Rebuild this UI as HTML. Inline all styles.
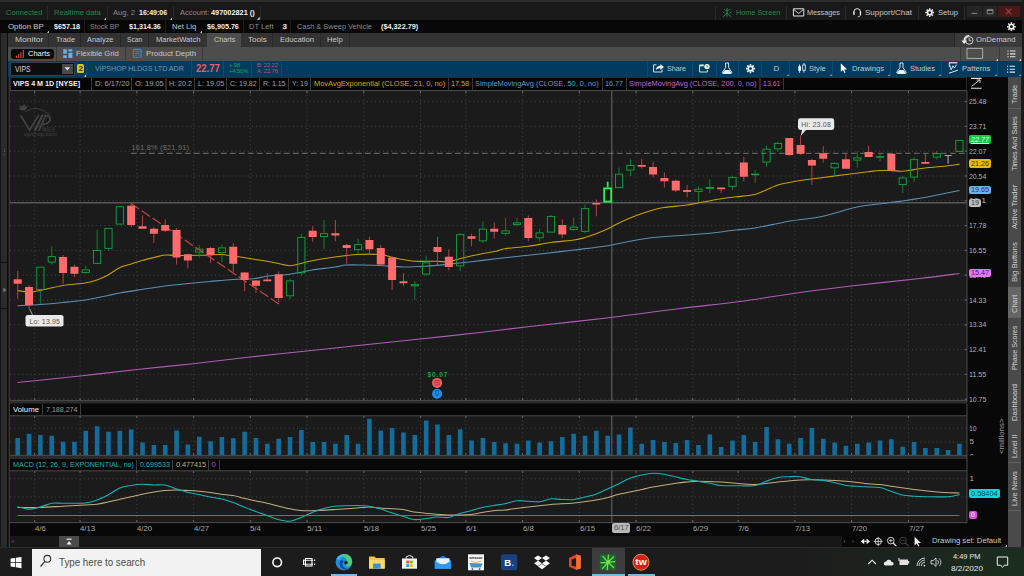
<!DOCTYPE html>
<html><head><meta charset="utf-8"><title>thinkorswim - VIPS chart</title>
<style>
html,body{margin:0;padding:0;background:#1a1a1a;}
body{width:1024px;height:576px;position:relative;overflow:hidden;font-family:"Liberation Sans",sans-serif;}
.r{position:absolute;display:block;}
.t{position:absolute;white-space:pre;display:block;transform-origin:0 0;}
svg text{font-family:"Liberation Sans",sans-serif;}
</style></head><body>
<div class="r" style="left:0.00px;top:0.00px;width:1024.00px;height:576.00px;background:#1a1a1a;"></div>
<div class="r" style="left:0.00px;top:0.00px;width:1024.00px;height:1.50px;background:#2c2c2c;"></div>
<div class="r" style="left:0.00px;top:1.50px;width:1022.00px;height:18.50px;background:#191919;"></div>
<div class="r" style="left:0.00px;top:20.00px;width:1022.00px;height:12.50px;background:#080808;"></div>
<div class="r" style="left:8.00px;top:32.50px;width:1014.00px;height:14.00px;background:#333333;"></div>
<div class="r" style="left:8.00px;top:46.50px;width:1014.00px;height:14.00px;background:#4d4d4d;"></div>
<div class="r" style="left:8.00px;top:60.50px;width:1013.50px;height:16.00px;background:#033b5e;"></div>
<div class="r" style="left:9.50px;top:76.60px;width:957.50px;height:14.00px;background:#080808;"></div>
<div class="r" style="left:0.00px;top:32.50px;width:1.20px;height:515.50px;background:#141414;"></div>
<div class="r" style="left:1.20px;top:32.50px;width:6.20px;height:515.50px;background:#2b2b2b;"></div>
<div class="r" style="left:7.40px;top:32.50px;width:1.10px;height:515.50px;background:#0c0c0c;"></div>
<div class="r" style="left:8.50px;top:60.50px;width:1.30px;height:486.50px;background:#0a4468;"></div>
<div class="r" style="left:0.00px;top:261.50px;width:7.40px;height:1.10px;background:#101010;"></div>
<div class="r" style="left:0.00px;top:308.40px;width:7.40px;height:1.10px;background:#101010;"></div>
<div class="r" style="left:3.60px;top:148.60px;width:1.00px;height:1.00px;background:#5a5a5a;"></div>
<div class="r" style="left:3.60px;top:151.40px;width:1.00px;height:1.00px;background:#5a5a5a;"></div>
<div class="r" style="left:3.60px;top:154.20px;width:1.00px;height:1.00px;background:#5a5a5a;"></div>
<svg class="r" style="left:2.6px;top:287px" width="4" height="6"><path d="M0.4 0.4L3.4 3L0.4 5.6Z" fill="#7a7a7a"/></svg>
<span class="t" style="left:5.60px;top:7.70px;font-size:8.00px;line-height:10px;color:#1e8a4c;transform:scaleX(0.941);">Connected</span>
<div class="r" style="left:46.75px;top:6.00px;width:1.00px;height:14.00px;background:#2a2a2a;"></div>
<span class="t" style="left:53.75px;top:7.70px;font-size:8.00px;line-height:10px;color:#1e8a4c;transform:scaleX(0.949);">Realtime data</span>
<svg class="r" style="left:103.70px;top:16.90px" width="2.7" height="2.7"><path d="M2.7 0V2.7H0Z" fill="#eee"/></svg>
<div class="r" style="left:107.00px;top:6.00px;width:1.00px;height:14.00px;background:#2a2a2a;"></div>
<span class="t" style="left:113.00px;top:7.70px;font-size:8.00px;line-height:10px;color:#8a8a8a;transform:scaleX(0.951);">Aug, 2</span>
<span class="t" style="left:138.75px;top:7.70px;font-size:8.00px;line-height:10px;color:#f2f2f2;transform:scaleX(0.879);font-weight:bold;">16:49:06</span>
<svg class="r" style="left:169.50px;top:16.90px" width="2.7" height="2.7"><path d="M2.7 0V2.7H0Z" fill="#eee"/></svg>
<div class="r" style="left:173.25px;top:6.00px;width:1.00px;height:14.00px;background:#2a2a2a;"></div>
<span class="t" style="left:179.75px;top:7.70px;font-size:8.00px;line-height:10px;color:#8a8a8a;transform:scaleX(0.940);">Account:</span>
<span class="t" style="left:211.25px;top:7.70px;font-size:8.00px;line-height:10px;color:#f2f2f2;transform:scaleX(0.919);font-weight:bold;">497002821 ()</span>
<svg class="r" style="left:257.00px;top:16.90px" width="2.7" height="2.7"><path d="M2.7 0V2.7H0Z" fill="#eee"/></svg>
<div class="r" style="left:260.10px;top:6.00px;width:1.00px;height:14.00px;background:#2a2a2a;"></div>
<div class="r" style="left:715.10px;top:6.00px;width:1.00px;height:14.00px;background:#2a2a2a;"></div>
<span class="t" style="left:735.60px;top:7.70px;font-size:8.00px;line-height:10px;color:#1e8a4c;transform:scaleX(0.908);">Home Screen</span>
<div class="r" style="left:786.40px;top:6.00px;width:1.00px;height:14.00px;background:#2a2a2a;"></div>
<span class="t" style="left:806.90px;top:7.70px;font-size:8.00px;line-height:10px;color:#c8c8c8;transform:scaleX(0.901);">Messages</span>
<div class="r" style="left:845.10px;top:6.00px;width:1.00px;height:14.00px;background:#2a2a2a;"></div>
<span class="t" style="left:865.00px;top:7.70px;font-size:8.00px;line-height:10px;color:#c8c8c8;transform:scaleX(0.995);">Support/Chat</span>
<div class="r" style="left:918.00px;top:6.00px;width:1.00px;height:14.00px;background:#2a2a2a;"></div>
<span class="t" style="left:937.90px;top:7.70px;font-size:8.00px;line-height:10px;color:#c8c8c8;transform:scaleX(0.957);">Setup</span>
<div class="r" style="left:964.00px;top:6.00px;width:1.00px;height:14.00px;background:#2a2a2a;"></div>
<div class="r" style="left:967.25px;top:6.25px;width:14.35px;height:10.75px;background:#262626;"></div>
<div class="r" style="left:982.90px;top:6.25px;width:14.10px;height:10.75px;background:#262626;"></div>
<div class="r" style="left:997.90px;top:6.25px;width:22.10px;height:10.75px;background:#4a1816;"></div>
<span class="t" style="left:8.10px;top:22.00px;font-size:8.00px;line-height:10px;color:#c8c8c8;transform:scaleX(0.978);">Option BP</span>
<svg class="r" style="left:46.50px;top:30.00px" width="2.7" height="2.7"><path d="M2.7 0V2.7H0Z" fill="#eee"/></svg>
<span class="t" style="left:54.00px;top:22.00px;font-size:8.00px;line-height:10px;color:#f2f2f2;transform:scaleX(0.899);font-weight:bold;">$657.18</span>
<div class="r" style="left:83.50px;top:20.00px;width:1.00px;height:12.50px;background:#1e1e1e;"></div>
<span class="t" style="left:90.00px;top:22.00px;font-size:8.00px;line-height:10px;color:#8a8a8a;transform:scaleX(0.893);">Stock BP</span>
<span class="t" style="left:129.40px;top:22.00px;font-size:8.00px;line-height:10px;color:#f2f2f2;transform:scaleX(0.895);font-weight:bold;">$1,314.36</span>
<div class="r" style="left:165.10px;top:20.00px;width:1.00px;height:12.50px;background:#1e1e1e;"></div>
<span class="t" style="left:171.90px;top:22.00px;font-size:8.00px;line-height:10px;color:#c8c8c8;transform:scaleX(0.960);">Net Liq</span>
<svg class="r" style="left:199.50px;top:30.00px" width="2.7" height="2.7"><path d="M2.7 0V2.7H0Z" fill="#eee"/></svg>
<span class="t" style="left:206.90px;top:22.00px;font-size:8.00px;line-height:10px;color:#f2f2f2;transform:scaleX(0.895);font-weight:bold;">$6,905.76</span>
<div class="r" style="left:242.50px;top:20.00px;width:1.00px;height:12.50px;background:#1e1e1e;"></div>
<span class="t" style="left:248.50px;top:22.00px;font-size:8.00px;line-height:10px;color:#8a8a8a;transform:scaleX(0.939);">DT Left</span>
<span class="t" style="left:282.50px;top:22.00px;font-size:8.00px;line-height:10px;color:#f2f2f2;font-weight:bold;">3</span>
<div class="r" style="left:290.10px;top:20.00px;width:1.00px;height:12.50px;background:#1e1e1e;"></div>
<span class="t" style="left:296.90px;top:22.00px;font-size:8.00px;line-height:10px;color:#8a8a8a;transform:scaleX(0.926);">Cash &amp; Sweep Vehicle</span>
<span class="t" style="left:381.25px;top:22.00px;font-size:8.00px;line-height:10px;color:#f2f2f2;transform:scaleX(0.910);font-weight:bold;">($4,322.79)</span>
<div class="r" style="left:206.90px;top:32.50px;width:34.60px;height:14.00px;background:#4d4d4d;"></div>
<span class="t" style="left:14.75px;top:34.60px;font-size:8.00px;line-height:10px;color:#c8c8c8;transform:scaleX(1.063);">Monitor</span>
<span class="t" style="left:55.60px;top:34.60px;font-size:8.00px;line-height:10px;color:#c8c8c8;transform:scaleX(0.929);">Trade</span>
<span class="t" style="left:87.25px;top:34.60px;font-size:8.00px;line-height:10px;color:#c8c8c8;transform:scaleX(0.931);">Analyze</span>
<span class="t" style="left:126.90px;top:34.60px;font-size:8.00px;line-height:10px;color:#c8c8c8;transform:scaleX(0.842);">Scan</span>
<span class="t" style="left:155.60px;top:34.60px;font-size:8.00px;line-height:10px;color:#c8c8c8;transform:scaleX(0.948);">MarketWatch</span>
<span class="t" style="left:213.75px;top:34.60px;font-size:8.00px;line-height:10px;color:#c8c8c8;transform:scaleX(0.902);">Charts</span>
<span class="t" style="left:248.00px;top:34.60px;font-size:8.00px;line-height:10px;color:#c8c8c8;transform:scaleX(1.012);">Tools</span>
<span class="t" style="left:279.75px;top:34.60px;font-size:8.00px;line-height:10px;color:#c8c8c8;transform:scaleX(0.955);">Education</span>
<span class="t" style="left:326.90px;top:34.60px;font-size:8.00px;line-height:10px;color:#c8c8c8;transform:scaleX(0.948);">Help</span>
<div class="r" style="left:48.25px;top:33.00px;width:1.00px;height:13.50px;background:#272727;"></div>
<div class="r" style="left:80.10px;top:33.00px;width:1.00px;height:13.50px;background:#272727;"></div>
<div class="r" style="left:120.10px;top:33.00px;width:1.00px;height:13.50px;background:#272727;"></div>
<div class="r" style="left:148.00px;top:33.00px;width:1.00px;height:13.50px;background:#272727;"></div>
<div class="r" style="left:272.25px;top:33.00px;width:1.00px;height:13.50px;background:#272727;"></div>
<div class="r" style="left:320.10px;top:33.00px;width:1.00px;height:13.50px;background:#272727;"></div>
<div class="r" style="left:348.50px;top:33.00px;width:1.00px;height:13.50px;background:#272727;"></div>
<div class="r" style="left:954.75px;top:33.00px;width:67.25px;height:13.50px;background:#3a3a3a;"></div>
<div class="r" style="left:954.25px;top:33.00px;width:1.00px;height:13.50px;background:#272727;"></div>
<span class="t" style="left:976.25px;top:34.60px;font-size:8.00px;line-height:10px;color:#c8c8c8;transform:scaleX(0.965);">OnDemand</span>
<div class="r" style="left:11.00px;top:49.00px;width:43.00px;height:9.60px;background:#0a0a0a;border-radius:3px;"></div>
<span class="t" style="left:28.00px;top:48.80px;font-size:8.00px;line-height:10px;color:#f2f2f2;transform:scaleX(0.934);">Charts</span>
<div class="r" style="left:56.00px;top:47.00px;width:1.00px;height:14.00px;background:#3a3a3a;"></div>
<span class="t" style="left:76.00px;top:48.80px;font-size:8.00px;line-height:10px;color:#c8c8c8;transform:scaleX(0.952);">Flexible Grid</span>
<div class="r" style="left:124.75px;top:47.00px;width:1.00px;height:14.00px;background:#3a3a3a;"></div>
<span class="t" style="left:145.60px;top:48.80px;font-size:8.00px;line-height:10px;color:#c8c8c8;transform:scaleX(0.978);">Product Depth</span>
<div class="r" style="left:202.00px;top:47.00px;width:1.00px;height:14.00px;background:#3a3a3a;"></div>
<div class="r" style="left:959.90px;top:47.00px;width:1.00px;height:14.00px;background:#3a3a3a;"></div>
<div class="r" style="left:998.50px;top:47.00px;width:1.00px;height:14.00px;background:#3a3a3a;"></div>
<svg class="r" style="left:995.50px;top:58.00px" width="2.7" height="2.7"><path d="M2.7 0V2.7H0Z" fill="#eee"/></svg>
<svg class="r" style="left:1018.50px;top:58.00px" width="2.7" height="2.7"><path d="M2.7 0V2.7H0Z" fill="#eee"/></svg>
<div class="r" style="left:10.60px;top:63.20px;width:63.20px;height:11.60px;background:#0d0d0d;box-shadow:0 0 0 0.6px #4a4a4a;"></div>
<span class="t" style="left:15.00px;top:63.75px;font-size:8.50px;line-height:10px;color:#d8d8d8;transform:scaleX(0.805);">VIPS</span>
<div class="r" style="left:62.00px;top:64.00px;width:11.00px;height:10.00px;background:#4a4a4a;"></div>
<div class="r" style="left:77.20px;top:64.00px;width:6.80px;height:9.00px;background:#e0c400;border-radius:1.5px;"></div>
<span class="t" style="left:78.60px;top:63.50px;font-size:8.00px;line-height:10px;color:#333;font-weight:bold;">2</span>
<svg class="r" style="left:84.00px;top:74.20px" width="2.7" height="2.7"><path d="M2.7 0V2.7H0Z" fill="#eee"/></svg>
<div class="r" style="left:85.75px;top:61.00px;width:1.00px;height:15.60px;background:#0b4a72;"></div>
<span class="t" style="left:94.50px;top:64.00px;font-size:8.00px;line-height:10px;color:#7d95a8;transform:scaleX(0.882);">VIPSHOP HLDGS LTD ADR</span>
<div class="r" style="left:190.50px;top:61.00px;width:1.00px;height:15.60px;background:#0b4a72;"></div>
<span class="t" style="left:195.75px;top:63.00px;font-size:10.00px;line-height:12px;color:#f25c5c;transform:scaleX(0.949);font-weight:bold;">22.77</span>
<div class="r" style="left:223.00px;top:61.00px;width:1.00px;height:15.60px;background:#0b4a72;"></div>
<span class="t" style="left:228.50px;top:62.25px;font-size:5.50px;line-height:7px;color:#19a84a;transform:scaleX(1.013);">+.98</span>
<span class="t" style="left:228.50px;top:68.05px;font-size:5.50px;line-height:7px;color:#19a84a;transform:scaleX(1.023);">+4.50%</span>
<div class="r" style="left:250.50px;top:61.00px;width:1.00px;height:15.60px;background:#0b4a72;"></div>
<span class="t" style="left:256.50px;top:62.25px;font-size:5.50px;line-height:7px;color:#c8506e;transform:scaleX(1.013);">B: 22.22</span>
<span class="t" style="left:256.50px;top:68.05px;font-size:5.50px;line-height:7px;color:#c8506e;transform:scaleX(1.013);">A: 22.76</span>
<div class="r" style="left:281.00px;top:61.00px;width:1.00px;height:15.60px;background:#0b4a72;"></div>
<div class="r" style="left:646.50px;top:61.00px;width:1.00px;height:15.60px;background:#0b4a72;"></div>
<div class="r" style="left:692.00px;top:61.00px;width:1.00px;height:15.60px;background:#0b4a72;"></div>
<div class="r" style="left:715.75px;top:61.00px;width:1.00px;height:15.60px;background:#0b4a72;"></div>
<div class="r" style="left:738.25px;top:61.00px;width:1.00px;height:15.60px;background:#0b4a72;"></div>
<div class="r" style="left:760.75px;top:61.00px;width:1.00px;height:15.60px;background:#0b4a72;"></div>
<div class="r" style="left:789.00px;top:61.00px;width:1.00px;height:15.60px;background:#0b4a72;"></div>
<div class="r" style="left:832.00px;top:61.00px;width:1.00px;height:15.60px;background:#0b4a72;"></div>
<div class="r" style="left:890.00px;top:61.00px;width:1.00px;height:15.60px;background:#0b4a72;"></div>
<div class="r" style="left:940.75px;top:61.00px;width:1.00px;height:15.60px;background:#0b4a72;"></div>
<div class="r" style="left:997.00px;top:61.00px;width:1.00px;height:15.60px;background:#0b4a72;"></div>
<span class="t" style="left:666.75px;top:64.00px;font-size:8.00px;line-height:10px;color:#c8c8c8;transform:scaleX(0.890);">Share</span>
<span class="t" style="left:773.60px;top:64.00px;font-size:8.00px;line-height:10px;color:#c8c8c8;">D</span>
<span class="t" style="left:809.25px;top:64.00px;font-size:8.00px;line-height:10px;color:#c8c8c8;transform:scaleX(0.942);">Style</span>
<span class="t" style="left:852.25px;top:64.00px;font-size:8.00px;line-height:10px;color:#c8c8c8;transform:scaleX(0.960);">Drawings</span>
<span class="t" style="left:910.00px;top:64.00px;font-size:8.00px;line-height:10px;color:#c8c8c8;transform:scaleX(0.937);">Studies</span>
<span class="t" style="left:961.75px;top:64.00px;font-size:8.00px;line-height:10px;color:#c8c8c8;transform:scaleX(0.948);">Patterns</span>
<svg class="r" style="left:786.00px;top:73.60px" width="2.7" height="2.7"><path d="M2.7 0V2.7H0Z" fill="#9ab"/></svg>
<svg class="r" style="left:829.00px;top:73.60px" width="2.7" height="2.7"><path d="M2.7 0V2.7H0Z" fill="#9ab"/></svg>
<svg class="r" style="left:887.00px;top:73.60px" width="2.7" height="2.7"><path d="M2.7 0V2.7H0Z" fill="#9ab"/></svg>
<svg class="r" style="left:938.00px;top:73.60px" width="2.7" height="2.7"><path d="M2.7 0V2.7H0Z" fill="#9ab"/></svg>
<svg class="r" style="left:994.00px;top:73.60px" width="2.7" height="2.7"><path d="M2.7 0V2.7H0Z" fill="#9ab"/></svg>
<svg class="r" style="left:1018.00px;top:73.60px" width="2.7" height="2.7"><path d="M2.7 0V2.7H0Z" fill="#9ab"/></svg>
<div class="r" style="left:10.60px;top:77.60px;width:80.40px;height:12.20px;background:#050505;box-shadow:0 0 0 0.7px #3c3c3c;"></div>
<span class="t" style="left:12.90px;top:78.60px;font-size:8.00px;line-height:10px;color:#f2f2f2;transform:scaleX(0.888);font-weight:bold;">VIPS 4 M 1D [NYSE]</span>
<div class="r" style="left:92.00px;top:77.60px;width:39.00px;height:12.20px;background:#050505;box-shadow:0 0 0 0.7px #3c3c3c;"></div>
<span class="t" style="left:94.50px;top:78.60px;font-size:8.00px;line-height:10px;color:#a0a0a0;transform:scaleX(0.934);">D: 6/17/20</span>
<div class="r" style="left:132.00px;top:77.60px;width:33.25px;height:12.20px;background:#050505;box-shadow:0 0 0 0.7px #3c3c3c;"></div>
<span class="t" style="left:134.75px;top:78.60px;font-size:8.00px;line-height:10px;color:#a0a0a0;transform:scaleX(0.937);">O: 19.05</span>
<div class="r" style="left:166.50px;top:77.60px;width:27.50px;height:12.20px;background:#050505;box-shadow:0 0 0 0.7px #3c3c3c;"></div>
<span class="t" style="left:169.00px;top:78.60px;font-size:8.00px;line-height:10px;color:#a0a0a0;transform:scaleX(0.892);">H: 20.2</span>
<div class="r" style="left:195.25px;top:77.60px;width:30.75px;height:12.20px;background:#050505;box-shadow:0 0 0 0.7px #3c3c3c;"></div>
<span class="t" style="left:197.75px;top:78.60px;font-size:8.00px;line-height:10px;color:#a0a0a0;transform:scaleX(0.908);">L: 19.05</span>
<div class="r" style="left:227.25px;top:77.60px;width:31.75px;height:12.20px;background:#050505;box-shadow:0 0 0 0.7px #3c3c3c;"></div>
<span class="t" style="left:230.25px;top:78.60px;font-size:8.00px;line-height:10px;color:#a0a0a0;transform:scaleX(0.884);">C: 19.82</span>
<div class="r" style="left:260.25px;top:77.60px;width:27.50px;height:12.20px;background:#050505;box-shadow:0 0 0 0.7px #3c3c3c;"></div>
<span class="t" style="left:262.75px;top:78.60px;font-size:8.00px;line-height:10px;color:#a0a0a0;transform:scaleX(0.872);">R: 1.15</span>
<div class="r" style="left:289.00px;top:77.60px;width:21.25px;height:12.20px;background:#050505;box-shadow:0 0 0 0.7px #3c3c3c;"></div>
<span class="t" style="left:291.50px;top:78.60px;font-size:8.00px;line-height:10px;color:#a0a0a0;transform:scaleX(0.863);">Y: 19</span>
<div class="r" style="left:311.25px;top:77.60px;width:136.25px;height:12.20px;background:#050505;box-shadow:0 0 0 0.7px #3c3c3c;"></div>
<span class="t" style="left:313.75px;top:78.60px;font-size:8.00px;line-height:10px;color:#d8a800;transform:scaleX(0.932);">MovAvgExponential (CLOSE, 21, 0, no)</span>
<div class="r" style="left:449.25px;top:77.60px;width:22.50px;height:12.20px;background:#050505;box-shadow:0 0 0 0.7px #3c3c3c;"></div>
<span class="t" style="left:451.25px;top:78.60px;font-size:8.00px;line-height:10px;color:#d8a800;transform:scaleX(0.899);">17.58</span>
<div class="r" style="left:473.00px;top:77.60px;width:128.75px;height:12.20px;background:#050505;box-shadow:0 0 0 0.7px #3c3c3c;"></div>
<span class="t" style="left:475.00px;top:78.60px;font-size:8.00px;line-height:10px;color:#5a9fd4;transform:scaleX(0.922);">SimpleMovingAvg (CLOSE, 50, 0, no)</span>
<div class="r" style="left:603.00px;top:77.60px;width:22.50px;height:12.20px;background:#050505;box-shadow:0 0 0 0.7px #3c3c3c;"></div>
<span class="t" style="left:605.00px;top:78.60px;font-size:8.00px;line-height:10px;color:#5a9fd4;transform:scaleX(0.899);">16.77</span>
<div class="r" style="left:626.75px;top:77.60px;width:132.50px;height:12.20px;background:#050505;box-shadow:0 0 0 0.7px #3c3c3c;"></div>
<span class="t" style="left:629.25px;top:78.60px;font-size:8.00px;line-height:10px;color:#c864c8;transform:scaleX(0.920);">SimpleMovingAvg (CLOSE, 200, 0, no)</span>
<div class="r" style="left:760.50px;top:77.60px;width:22.50px;height:12.20px;background:#050505;box-shadow:0 0 0 0.7px #3c3c3c;"></div>
<span class="t" style="left:763.00px;top:78.60px;font-size:8.00px;line-height:10px;color:#c864c8;transform:scaleX(0.874);">13.61</span>
<div class="r" style="left:784.30px;top:77.60px;width:181.70px;height:12.20px;background:#050505;box-shadow:0 0 0 0.7px #3c3c3c;"></div>
<span class="t" style="left:0.00px;top:78.60px;font-size:8.00px;line-height:10px;color:#a0a0a0;"></span>
<div class="r" style="left:9.60px;top:90.60px;width:957.40px;height:310.00px;background:#1b1b1b;"></div>
<div class="r" style="left:967.00px;top:76.60px;width:40.50px;height:470.40px;background:#080808;"></div>
<div class="r" style="left:9.60px;top:400.60px;width:957.40px;height:2.90px;background:#2a2a2a;"></div>
<div class="r" style="left:9.60px;top:403.50px;width:957.40px;height:12.30px;background:#080808;"></div>
<div class="r" style="left:9.60px;top:415.80px;width:957.40px;height:39.60px;background:#1b1b1b;"></div>
<div class="r" style="left:9.60px;top:455.40px;width:957.40px;height:4.00px;background:#2a2a2a;"></div>
<div class="r" style="left:9.60px;top:459.40px;width:957.40px;height:11.40px;background:#080808;"></div>
<div class="r" style="left:9.60px;top:470.80px;width:957.40px;height:51.80px;background:#1b1b1b;"></div>
<div class="r" style="left:9.60px;top:522.60px;width:957.40px;height:13.40px;background:#080808;"></div>
<div class="r" style="left:9.60px;top:536.00px;width:832.40px;height:11.00px;background:#171717;"></div>
<div class="r" style="left:842.00px;top:536.00px;width:165.50px;height:11.00px;background:#080808;"></div>
<div class="r" style="left:1007.50px;top:76.60px;width:13.50px;height:470.40px;background:#4a4a4a;"></div>
<div class="r" style="left:1022.00px;top:0.00px;width:2.00px;height:547.00px;background:#1a1a1a;"></div>
<svg class="r" style="left:0;top:0" width="1024" height="576" viewBox="0 0 1024 576">
<path d="M34.7 91V400.6M34.7 416V455M34.7 471V522.5M80.1 91V400.6M80.1 416V455M80.1 471V522.5M136.8 91V400.6M136.8 416V455M136.8 471V522.5M193.6 91V400.6M193.6 416V455M193.6 471V522.5M250.3 91V400.6M250.3 416V455M250.3 471V522.5M307.0 91V400.6M307.0 416V455M307.0 471V522.5M363.8 91V400.6M363.8 416V455M363.8 471V522.5M420.5 91V400.6M420.5 416V455M420.5 471V522.5M465.9 91V400.6M465.9 416V455M465.9 471V522.5M522.6 91V400.6M522.6 416V455M522.6 471V522.5M579.3 91V400.6M579.3 416V455M579.3 471V522.5M636.1 91V400.6M636.1 416V455M636.1 471V522.5M692.8 91V400.6M692.8 416V455M692.8 471V522.5M738.2 91V400.6M738.2 416V455M738.2 471V522.5M794.9 91V400.6M794.9 416V455M794.9 471V522.5M851.6 91V400.6M851.6 416V455M851.6 471V522.5M908.4 91V400.6M908.4 416V455M908.4 471V522.5" stroke="#444" stroke-width="1" stroke-dasharray="1 3.1" fill="none"/>
<path d="M10 101.6H967M10 126.4H967M10 151.2H967M10 176.0H967M10 200.8H967M10 225.6H967M10 250.4H967M10 275.2H967M10 300.0H967M10 324.8H967M10 349.6H967M10 374.4H967M10 399.2H967M10 428.2H967M10 442.0H967M10 478.8H967M10 497.0H967" stroke="#444" stroke-width="1" stroke-dasharray="1 3.1" fill="none"/>
<path d="M34.7 91v2.5M34.7 398v2.5M34.7 416v2M34.7 453v2.4M34.7 471v2M34.7 520v2.5M80.1 91v2.5M80.1 398v2.5M80.1 416v2M80.1 453v2.4M80.1 471v2M80.1 520v2.5M136.8 91v2.5M136.8 398v2.5M136.8 416v2M136.8 453v2.4M136.8 471v2M136.8 520v2.5M193.6 91v2.5M193.6 398v2.5M193.6 416v2M193.6 453v2.4M193.6 471v2M193.6 520v2.5M250.3 91v2.5M250.3 398v2.5M250.3 416v2M250.3 453v2.4M250.3 471v2M250.3 520v2.5M307.0 91v2.5M307.0 398v2.5M307.0 416v2M307.0 453v2.4M307.0 471v2M307.0 520v2.5M363.8 91v2.5M363.8 398v2.5M363.8 416v2M363.8 453v2.4M363.8 471v2M363.8 520v2.5M420.5 91v2.5M420.5 398v2.5M420.5 416v2M420.5 453v2.4M420.5 471v2M420.5 520v2.5M465.9 91v2.5M465.9 398v2.5M465.9 416v2M465.9 453v2.4M465.9 471v2M465.9 520v2.5M522.6 91v2.5M522.6 398v2.5M522.6 416v2M522.6 453v2.4M522.6 471v2M522.6 520v2.5M579.3 91v2.5M579.3 398v2.5M579.3 416v2M579.3 453v2.4M579.3 471v2M579.3 520v2.5M636.1 91v2.5M636.1 398v2.5M636.1 416v2M636.1 453v2.4M636.1 471v2M636.1 520v2.5M692.8 91v2.5M692.8 398v2.5M692.8 416v2M692.8 453v2.4M692.8 471v2M692.8 520v2.5M738.2 91v2.5M738.2 398v2.5M738.2 416v2M738.2 453v2.4M738.2 471v2M738.2 520v2.5M794.9 91v2.5M794.9 398v2.5M794.9 416v2M794.9 453v2.4M794.9 471v2M794.9 520v2.5M851.6 91v2.5M851.6 398v2.5M851.6 416v2M851.6 453v2.4M851.6 471v2M851.6 520v2.5M908.4 91v2.5M908.4 398v2.5M908.4 416v2M908.4 453v2.4M908.4 471v2M908.4 520v2.5M964.5 101.6h2.5M964.5 126.4h2.5M964.5 151.2h2.5M964.5 176.0h2.5M964.5 200.8h2.5M964.5 225.6h2.5M964.5 250.4h2.5M964.5 275.2h2.5M964.5 300.0h2.5M964.5 324.8h2.5M964.5 349.6h2.5M964.5 374.4h2.5M964.5 399.2h2.5" stroke="#6a6a6a" stroke-width="1" fill="none"/>
<path d="M10 400.6H967M10 415.8H967M10 455.4H967M10 470.8H967M10 522.6H967M967 91V522.6M10 90.6H967" stroke="#4a4a4a" stroke-width="1" fill="none"/>
<path d="M10 202.8H967" stroke="#555" stroke-width="1.6"/>
<path d="M611.8 91V400.6M611.8 416V455.4M611.8 471V522.6" stroke="#7c7c7c" stroke-width="0.8"/>
<path d="M131 153.3H967" stroke="#7c7c7c" stroke-width="0.9" stroke-dasharray="5.6 3.4"/>
<text x="131.5" y="150.4" font-size="7.4" fill="#6c6c6c" textLength="57.5" lengthAdjust="spacing">161.8%  ($21.91)</text>
<path d="M17.50 382.50C27.50 381.46 60.88 378.08 80.00 376.00C99.12 373.92 118.92 371.46 137.00 369.50C155.08 367.54 174.92 365.75 193.00 363.75C211.08 361.75 231.76 359.04 250.00 357.00C268.24 354.96 288.92 352.92 307.00 351.00C325.08 349.08 344.92 346.92 363.00 345.00C381.08 343.08 401.28 341.00 420.00 339.00C438.72 337.00 462.40 334.50 480.00 332.50C497.60 330.50 509.04 328.90 530.00 326.50C550.96 324.10 587.00 320.38 611.00 317.50C635.00 314.62 659.36 311.06 680.00 308.50C700.64 305.94 720.80 304.06 740.00 301.50C759.20 298.94 780.80 295.14 800.00 292.50C819.20 289.86 840.80 287.24 860.00 285.00C879.20 282.76 904.08 280.34 920.00 278.50C935.92 276.66 953.18 274.30 959.50 273.50" stroke="#b05cb8" stroke-width="1.1" fill="none"/>
<path d="M17.50 305.75C21.10 305.55 32.72 305.02 40.00 304.50C47.28 303.98 55.80 303.22 63.00 302.50C70.20 301.78 77.80 301.12 85.00 300.00C92.20 298.88 102.40 296.62 108.00 295.50C113.60 294.38 114.56 293.96 120.00 293.00C125.44 292.04 134.80 290.62 142.00 289.50C149.20 288.38 157.64 286.96 165.00 286.00C172.36 285.04 180.80 284.22 188.00 283.50C195.20 282.78 202.80 282.14 210.00 281.50C217.20 280.86 225.80 279.98 233.00 279.50C240.20 279.02 249.56 279.02 255.00 278.50C260.44 277.98 261.40 276.93 267.00 276.25C272.60 275.57 284.56 274.90 290.00 274.25C295.44 273.60 297.48 272.88 301.00 272.20C304.52 271.52 306.56 270.83 312.00 270.00C317.44 269.17 329.56 267.80 335.00 267.00C340.44 266.20 341.52 265.32 346.00 265.00C350.48 264.68 357.56 264.92 363.00 265.00C368.44 265.08 373.60 265.18 380.00 265.50C386.40 265.82 395.80 266.88 403.00 267.00C410.20 267.12 417.80 266.69 425.00 266.25C432.20 265.81 440.64 264.97 448.00 264.25C455.36 263.53 463.32 262.63 471.00 261.75C478.68 260.87 488.64 259.59 496.00 258.75C503.36 257.91 509.96 257.26 517.00 256.50C524.04 255.74 530.88 255.04 540.00 254.00C549.12 252.96 563.12 251.32 574.00 250.00C584.88 248.68 599.04 247.15 608.00 245.75C616.96 244.35 622.80 242.57 630.00 241.25C637.20 239.93 643.88 238.50 653.00 237.50C662.12 236.50 677.88 235.68 687.00 235.00C696.12 234.32 702.16 234.05 710.00 233.25C717.84 232.45 728.80 230.84 736.00 230.00C743.20 229.16 746.52 229.40 755.00 228.00C763.48 226.60 778.12 223.13 789.00 221.25C799.88 219.37 812.12 218.53 823.00 216.25C833.88 213.97 846.12 209.20 857.00 207.00C867.88 204.80 880.12 204.02 891.00 202.50C901.88 200.98 915.88 199.05 925.00 197.50C934.12 195.95 942.48 193.92 948.00 192.80C953.52 191.68 957.66 190.87 959.50 190.50" stroke="#5a8fb4" stroke-width="1.1" fill="none"/>
<path d="M17.50 290.50C19.34 290.74 25.40 292.00 29.00 292.00C32.60 292.00 34.56 291.54 40.00 290.50C45.44 289.46 55.80 286.70 63.00 285.50C70.20 284.30 79.56 283.88 85.00 283.00C90.44 282.12 93.32 281.28 97.00 280.00C100.68 278.72 104.32 277.00 108.00 275.00C111.68 273.00 116.32 269.26 120.00 267.50C123.68 265.74 127.48 265.12 131.00 264.00C134.52 262.88 138.32 261.54 142.00 260.50C145.68 259.46 150.32 258.38 154.00 257.50C157.68 256.62 161.48 255.32 165.00 255.00C168.52 254.68 170.56 255.45 176.00 255.50C181.44 255.55 193.56 255.38 199.00 255.30C204.44 255.22 206.48 255.13 210.00 255.00C213.52 254.87 217.32 254.34 221.00 254.50C224.68 254.66 229.32 255.52 233.00 256.00C236.68 256.48 240.48 256.94 244.00 257.50C247.52 258.06 251.32 258.90 255.00 259.50C258.68 260.10 263.32 260.61 267.00 261.25C270.68 261.89 274.32 262.78 278.00 263.50C281.68 264.22 286.32 265.75 290.00 265.75C293.68 265.75 297.48 264.30 301.00 263.50C304.52 262.70 306.56 261.79 312.00 260.75C317.44 259.71 327.80 258.00 335.00 257.00C342.20 256.00 349.80 254.90 357.00 254.50C364.20 254.10 374.56 254.10 380.00 254.50C385.44 254.90 387.32 256.20 391.00 257.00C394.68 257.80 399.32 258.82 403.00 259.50C406.68 260.18 408.56 260.97 414.00 261.25C419.44 261.53 431.56 261.17 437.00 261.25C442.44 261.33 444.32 262.15 448.00 261.75C451.68 261.35 456.32 259.67 460.00 258.75C463.68 257.83 467.48 256.80 471.00 256.00C474.52 255.20 478.00 254.51 482.00 253.75C486.00 252.99 492.32 252.05 496.00 251.25C499.68 250.45 499.88 249.55 505.00 248.75C510.12 247.95 520.64 247.25 528.00 246.25C535.36 245.25 543.64 243.50 551.00 242.50C558.36 241.50 568.56 240.80 574.00 240.00C579.44 239.20 581.48 238.50 585.00 237.50C588.52 236.50 592.32 235.15 596.00 233.75C599.68 232.35 604.32 230.47 608.00 228.75C611.68 227.03 615.48 224.72 619.00 223.00C622.52 221.28 626.32 219.52 630.00 218.00C633.68 216.48 638.32 214.78 642.00 213.50C645.68 212.22 649.48 210.96 653.00 210.00C656.52 209.04 658.56 208.30 664.00 207.50C669.44 206.70 681.56 205.72 687.00 205.00C692.44 204.28 692.56 204.00 698.00 203.00C703.44 202.00 714.92 199.75 721.00 198.75C727.08 197.75 730.56 197.43 736.00 196.75C741.44 196.07 750.20 195.58 755.00 194.50C759.80 193.42 762.32 191.52 766.00 190.00C769.68 188.48 774.32 186.20 778.00 185.00C781.68 183.80 785.48 183.22 789.00 182.50C792.52 181.78 794.56 181.30 800.00 180.50C805.44 179.70 815.64 178.46 823.00 177.50C830.36 176.54 838.80 175.42 846.00 174.50C853.20 173.58 862.56 172.39 868.00 171.75C873.44 171.11 876.32 170.68 880.00 170.50C883.68 170.32 887.48 170.48 891.00 170.60C894.52 170.72 898.32 171.41 902.00 171.25C905.68 171.09 910.32 170.12 914.00 169.60C917.68 169.08 919.56 168.62 925.00 168.00C930.44 167.38 942.48 166.35 948.00 165.75C953.52 165.15 957.66 164.49 959.50 164.25" stroke="#c9a000" stroke-width="1.1" fill="none"/>
<path d="M131 203.5L278.8 304" stroke="#c84444" stroke-width="1.2" stroke-dasharray="10 3" fill="none"/>
<path d="M17.70 271.00V298.75" stroke="#c24a4a" stroke-width="0.9"/>
<rect x="13.70" y="279.30" width="8" height="4.45" fill="#ff6b6b"/>
<path d="M29.05 285.00V308.75" stroke="#c24a4a" stroke-width="0.9"/>
<rect x="25.05" y="287.00" width="8" height="18.00" fill="#ff6b6b"/>
<path d="M40.39 266.75V266.75M40.39 290.00V303.75" stroke="#0e8a30" stroke-width="0.9"/>
<rect x="36.79" y="267.15" width="7.2" height="22.45" fill="none" stroke="#12a83a" stroke-width="0.9"/>
<path d="M51.74 246.25V256.25M51.74 262.50V264.50" stroke="#0e8a30" stroke-width="0.9"/>
<rect x="48.14" y="256.65" width="7.2" height="5.45" fill="none" stroke="#12a83a" stroke-width="0.9"/>
<path d="M63.08 255.00V283.75" stroke="#c24a4a" stroke-width="0.9"/>
<rect x="59.08" y="257.00" width="8" height="16.00" fill="#ff6b6b"/>
<path d="M74.43 264.50V277.00" stroke="#c24a4a" stroke-width="0.9"/>
<rect x="70.43" y="266.75" width="8" height="7.00" fill="#ff6b6b"/>
<path d="M85.78 265.75V269.50M85.78 273.00V273.75" stroke="#0e8a30" stroke-width="0.9"/>
<rect x="82.18" y="269.90" width="7.2" height="2.70" fill="none" stroke="#12a83a" stroke-width="0.9"/>
<path d="M97.12 229.50V250.00M97.12 263.75V263.75" stroke="#0e8a30" stroke-width="0.9"/>
<rect x="93.52" y="250.40" width="7.2" height="12.95" fill="none" stroke="#12a83a" stroke-width="0.9"/>
<path d="M108.47 228.00V228.00M108.47 248.75V250.50" stroke="#0e8a30" stroke-width="0.9"/>
<rect x="104.87" y="228.40" width="7.2" height="19.95" fill="none" stroke="#12a83a" stroke-width="0.9"/>
<path d="M119.81 206.25V206.25M119.81 224.50V224.50" stroke="#0e8a30" stroke-width="0.9"/>
<rect x="116.21" y="206.65" width="7.2" height="17.45" fill="none" stroke="#12a83a" stroke-width="0.9"/>
<path d="M131.16 203.75V227.00" stroke="#c24a4a" stroke-width="0.9"/>
<rect x="127.16" y="205.75" width="8" height="19.25" fill="#ff6b6b"/>
<path d="M142.51 215.50V228.75" stroke="#c24a4a" stroke-width="0.9"/>
<rect x="138.51" y="226.25" width="8" height="2.50" fill="#ff6b6b"/>
<path d="M153.85 227.00V243.00" stroke="#c24a4a" stroke-width="0.9"/>
<rect x="149.85" y="228.75" width="8" height="5.00" fill="#ff6b6b"/>
<path d="M165.20 219.25V232.00" stroke="#c24a4a" stroke-width="0.9"/>
<rect x="161.20" y="225.00" width="8" height="5.75" fill="#ff6b6b"/>
<path d="M176.54 228.00V264.50" stroke="#c24a4a" stroke-width="0.9"/>
<rect x="172.54" y="230.00" width="8" height="27.50" fill="#ff6b6b"/>
<path d="M187.89 253.75V268.25" stroke="#c24a4a" stroke-width="0.9"/>
<rect x="183.89" y="254.25" width="8" height="6.25" fill="#ff6b6b"/>
<path d="M199.24 245.00V248.75M199.24 252.50V257.50" stroke="#0e8a30" stroke-width="0.9"/>
<rect x="195.64" y="249.15" width="7.2" height="2.95" fill="none" stroke="#12a83a" stroke-width="0.9"/>
<path d="M210.58 246.75V263.00" stroke="#c24a4a" stroke-width="0.9"/>
<rect x="206.58" y="248.00" width="8" height="7.00" fill="#ff6b6b"/>
<path d="M221.93 244.50V247.50M221.93 253.00V262.00" stroke="#0e8a30" stroke-width="0.9"/>
<rect x="218.33" y="247.90" width="7.2" height="4.70" fill="none" stroke="#12a83a" stroke-width="0.9"/>
<path d="M233.27 243.00V272.00" stroke="#c24a4a" stroke-width="0.9"/>
<rect x="229.27" y="246.75" width="8" height="17.00" fill="#ff6b6b"/>
<path d="M244.62 272.00V291.25" stroke="#c24a4a" stroke-width="0.9"/>
<rect x="240.62" y="272.50" width="8" height="7.50" fill="#ff6b6b"/>
<path d="M255.97 280.00V293.00" stroke="#c24a4a" stroke-width="0.9"/>
<rect x="251.97" y="280.50" width="8" height="5.25" fill="#ff6b6b"/>
<path d="M267.31 273.25V281.25" stroke="#c24a4a" stroke-width="0.9"/>
<rect x="263.31" y="279.50" width="8" height="1.75" fill="#ff6b6b"/>
<path d="M278.66 271.25V302.00" stroke="#c24a4a" stroke-width="0.9"/>
<rect x="274.66" y="274.25" width="8" height="23.75" fill="#ff6b6b"/>
<path d="M290.00 278.75V280.50M290.00 296.25V299.25" stroke="#0e8a30" stroke-width="0.9"/>
<rect x="286.40" y="280.90" width="7.2" height="14.95" fill="none" stroke="#12a83a" stroke-width="0.9"/>
<path d="M301.35 233.75V237.00M301.35 273.25V275.75" stroke="#0e8a30" stroke-width="0.9"/>
<rect x="297.75" y="237.40" width="7.2" height="35.45" fill="none" stroke="#12a83a" stroke-width="0.9"/>
<path d="M312.70 226.25V241.75" stroke="#c24a4a" stroke-width="0.9"/>
<rect x="308.70" y="230.75" width="8" height="6.25" fill="#ff6b6b"/>
<path d="M324.04 220.00V233.25M324.04 237.00V249.25" stroke="#0e8a30" stroke-width="0.9"/>
<rect x="320.44" y="233.65" width="7.2" height="2.95" fill="none" stroke="#12a83a" stroke-width="0.9"/>
<path d="M335.39 220.00V241.25" stroke="#c24a4a" stroke-width="0.9"/>
<rect x="331.39" y="233.25" width="8" height="2.25" fill="#ff6b6b"/>
<path d="M346.73 243.75V263.75" stroke="#c24a4a" stroke-width="0.9"/>
<rect x="342.73" y="245.00" width="8" height="3.00" fill="#ff6b6b"/>
<path d="M358.08 238.75V244.25M358.08 250.00V254.25" stroke="#0e8a30" stroke-width="0.9"/>
<rect x="354.48" y="244.65" width="7.2" height="4.95" fill="none" stroke="#12a83a" stroke-width="0.9"/>
<path d="M369.43 236.75V253.75" stroke="#c24a4a" stroke-width="0.9"/>
<rect x="365.43" y="240.00" width="8" height="9.25" fill="#ff6b6b"/>
<path d="M380.77 245.00V264.50" stroke="#c24a4a" stroke-width="0.9"/>
<rect x="376.77" y="248.00" width="8" height="16.50" fill="#ff6b6b"/>
<path d="M392.12 256.25V290.00" stroke="#c24a4a" stroke-width="0.9"/>
<rect x="388.12" y="257.50" width="8" height="22.50" fill="#ff6b6b"/>
<path d="M403.46 273.25V286.25" stroke="#c24a4a" stroke-width="0.9"/>
<rect x="399.46" y="281.25" width="8" height="2.00" fill="#ff6b6b"/>
<path d="M414.81 281.25V284.25M414.81 286.25V300.00" stroke="#0e8a30" stroke-width="0.9"/>
<rect x="411.21" y="284.65" width="7.2" height="1.20" fill="none" stroke="#12a83a" stroke-width="0.9"/>
<path d="M426.16 255.50V262.50M426.16 274.50V275.75" stroke="#0e8a30" stroke-width="0.9"/>
<rect x="422.56" y="262.90" width="7.2" height="11.20" fill="none" stroke="#12a83a" stroke-width="0.9"/>
<path d="M437.50 236.75V265.75" stroke="#c24a4a" stroke-width="0.9"/>
<rect x="433.50" y="247.00" width="8" height="5.00" fill="#ff6b6b"/>
<path d="M448.85 249.25V270.50" stroke="#c24a4a" stroke-width="0.9"/>
<rect x="444.85" y="256.75" width="8" height="10.25" fill="#ff6b6b"/>
<path d="M460.19 233.00V234.25M460.19 266.25V271.25" stroke="#0e8a30" stroke-width="0.9"/>
<rect x="456.59" y="234.65" width="7.2" height="31.20" fill="none" stroke="#12a83a" stroke-width="0.9"/>
<path d="M471.54 233.75V246.25" stroke="#c24a4a" stroke-width="0.9"/>
<rect x="467.54" y="236.25" width="8" height="2.50" fill="#ff6b6b"/>
<path d="M482.89 221.25V228.75M482.89 241.25V243.00" stroke="#0e8a30" stroke-width="0.9"/>
<rect x="479.29" y="229.15" width="7.2" height="11.70" fill="none" stroke="#12a83a" stroke-width="0.9"/>
<path d="M494.23 222.50V238.75" stroke="#c24a4a" stroke-width="0.9"/>
<rect x="490.23" y="228.75" width="8" height="3.00" fill="#ff6b6b"/>
<path d="M505.58 218.00V230.50M505.58 233.75V235.75" stroke="#0e8a30" stroke-width="0.9"/>
<rect x="501.98" y="230.90" width="7.2" height="2.45" fill="none" stroke="#12a83a" stroke-width="0.9"/>
<path d="M516.92 217.50V222.50M516.92 225.00V226.25" stroke="#0e8a30" stroke-width="0.9"/>
<rect x="513.32" y="222.90" width="7.2" height="1.70" fill="none" stroke="#12a83a" stroke-width="0.9"/>
<path d="M528.27 215.50V241.25" stroke="#c24a4a" stroke-width="0.9"/>
<rect x="524.27" y="218.00" width="8" height="20.00" fill="#ff6b6b"/>
<path d="M539.62 228.75V232.50M539.62 238.25V241.25" stroke="#0e8a30" stroke-width="0.9"/>
<rect x="536.02" y="232.90" width="7.2" height="4.95" fill="none" stroke="#12a83a" stroke-width="0.9"/>
<path d="M550.96 215.00V216.25M550.96 232.50V232.50" stroke="#0e8a30" stroke-width="0.9"/>
<rect x="547.36" y="216.65" width="7.2" height="15.45" fill="none" stroke="#12a83a" stroke-width="0.9"/>
<path d="M562.31 219.50V238.00" stroke="#c24a4a" stroke-width="0.9"/>
<rect x="558.31" y="225.00" width="8" height="9.50" fill="#ff6b6b"/>
<path d="M573.65 217.50V226.75M573.65 230.00V230.75" stroke="#0e8a30" stroke-width="0.9"/>
<rect x="570.05" y="227.15" width="7.2" height="2.45" fill="none" stroke="#12a83a" stroke-width="0.9"/>
<path d="M585.00 204.50V208.25M585.00 231.75V233.25" stroke="#0e8a30" stroke-width="0.9"/>
<rect x="581.40" y="208.65" width="7.2" height="22.70" fill="none" stroke="#12a83a" stroke-width="0.9"/>
<path d="M596.35 199.50V216.25" stroke="#c24a4a" stroke-width="0.9"/>
<rect x="592.35" y="203.00" width="8" height="1.50" fill="#ff6b6b"/>
<path d="M607.69 181.75V187.50" stroke="#22ee55" stroke-width="1.8"/>
<rect x="604.19" y="188.40" width="7" height="13.20" fill="none" stroke="#22ee55" stroke-width="1.9"/>
<path d="M619.04 167.50V173.75M619.04 188.00V188.00" stroke="#0e8a30" stroke-width="0.9"/>
<rect x="615.44" y="174.15" width="7.2" height="13.45" fill="none" stroke="#12a83a" stroke-width="0.9"/>
<path d="M630.38 159.25V165.00M630.38 170.50V176.25" stroke="#0e8a30" stroke-width="0.9"/>
<rect x="626.78" y="165.40" width="7.2" height="4.70" fill="none" stroke="#12a83a" stroke-width="0.9"/>
<path d="M641.73 158.75V168.75" stroke="#c24a4a" stroke-width="0.9"/>
<rect x="637.73" y="165.00" width="8" height="1.75" fill="#ff6b6b"/>
<path d="M653.08 161.75V177.50" stroke="#c24a4a" stroke-width="0.9"/>
<rect x="649.08" y="167.00" width="8" height="7.50" fill="#ff6b6b"/>
<path d="M664.42 172.50V187.50" stroke="#c24a4a" stroke-width="0.9"/>
<rect x="660.42" y="178.00" width="8" height="3.25" fill="#ff6b6b"/>
<path d="M675.77 179.50V192.00" stroke="#c24a4a" stroke-width="0.9"/>
<rect x="671.77" y="180.75" width="8" height="9.75" fill="#ff6b6b"/>
<path d="M687.11 185.00V197.50" stroke="#c24a4a" stroke-width="0.9"/>
<rect x="683.11" y="190.00" width="8" height="2.00" fill="#ff6b6b"/>
<path d="M698.46 186.25V188.75M698.46 191.75V202.00" stroke="#0e8a30" stroke-width="0.9"/>
<rect x="694.86" y="189.15" width="7.2" height="2.20" fill="none" stroke="#12a83a" stroke-width="0.9"/>
<path d="M709.81 179.50V187.00M709.81 188.75V193.00" stroke="#0e8a30" stroke-width="0.9"/>
<rect x="706.21" y="187.40" width="7.2" height="0.95" fill="none" stroke="#12a83a" stroke-width="0.9"/>
<path d="M721.15 187.00V193.00" stroke="#c24a4a" stroke-width="0.9"/>
<rect x="717.15" y="187.50" width="8" height="1.75" fill="#ff6b6b"/>
<path d="M732.50 175.75V177.00M732.50 186.75V190.00" stroke="#0e8a30" stroke-width="0.9"/>
<rect x="728.90" y="177.40" width="7.2" height="8.95" fill="none" stroke="#12a83a" stroke-width="0.9"/>
<path d="M743.84 157.00V181.25" stroke="#c24a4a" stroke-width="0.9"/>
<rect x="739.84" y="162.50" width="8" height="14.25" fill="#ff6b6b"/>
<path d="M755.19 170.00V173.75M755.19 175.00V183.00" stroke="#0e8a30" stroke-width="0.9"/>
<rect x="751.59" y="174.15" width="7.2" height="0.60" fill="none" stroke="#12a83a" stroke-width="0.9"/>
<path d="M766.54 145.75V148.75M766.54 162.50V167.00" stroke="#0e8a30" stroke-width="0.9"/>
<rect x="762.94" y="149.15" width="7.2" height="12.95" fill="none" stroke="#12a83a" stroke-width="0.9"/>
<path d="M777.88 142.00V143.00M777.88 149.25V152.00" stroke="#0e8a30" stroke-width="0.9"/>
<rect x="774.28" y="143.40" width="7.2" height="5.45" fill="none" stroke="#12a83a" stroke-width="0.9"/>
<path d="M789.23 138.00V156.25" stroke="#c24a4a" stroke-width="0.9"/>
<rect x="785.23" y="138.00" width="8" height="17.00" fill="#ff6b6b"/>
<path d="M800.57 135.75V155.00" stroke="#c24a4a" stroke-width="0.9"/>
<rect x="796.57" y="145.00" width="8" height="8.75" fill="#ff6b6b"/>
<path d="M811.92 158.75V185.00" stroke="#c24a4a" stroke-width="0.9"/>
<rect x="807.92" y="160.00" width="8" height="5.50" fill="#ff6b6b"/>
<path d="M823.27 146.25V162.50" stroke="#c24a4a" stroke-width="0.9"/>
<rect x="819.27" y="153.25" width="8" height="5.50" fill="#ff6b6b"/>
<path d="M834.61 162.00V163.00M834.61 168.25V177.00" stroke="#0e8a30" stroke-width="0.9"/>
<rect x="831.01" y="163.40" width="7.2" height="4.45" fill="none" stroke="#12a83a" stroke-width="0.9"/>
<path d="M845.96 153.25V168.75" stroke="#c24a4a" stroke-width="0.9"/>
<rect x="841.96" y="159.25" width="8" height="9.50" fill="#ff6b6b"/>
<path d="M857.30 151.25V157.50M857.30 160.50V167.50" stroke="#0e8a30" stroke-width="0.9"/>
<rect x="853.70" y="157.90" width="7.2" height="2.20" fill="none" stroke="#12a83a" stroke-width="0.9"/>
<path d="M868.65 145.75V157.50" stroke="#c24a4a" stroke-width="0.9"/>
<rect x="864.65" y="152.00" width="8" height="5.00" fill="#ff6b6b"/>
<path d="M880.00 153.75V156.25M880.00 157.50V161.25" stroke="#0e8a30" stroke-width="0.9"/>
<rect x="876.40" y="156.65" width="7.2" height="0.60" fill="none" stroke="#12a83a" stroke-width="0.9"/>
<path d="M891.34 153.25V170.50" stroke="#c24a4a" stroke-width="0.9"/>
<rect x="887.34" y="153.75" width="8" height="16.75" fill="#ff6b6b"/>
<path d="M902.69 175.75V177.50M902.69 185.00V193.00" stroke="#0e8a30" stroke-width="0.9"/>
<rect x="899.09" y="177.90" width="7.2" height="6.70" fill="none" stroke="#12a83a" stroke-width="0.9"/>
<path d="M914.03 157.50V159.25M914.03 177.50V181.75" stroke="#0e8a30" stroke-width="0.9"/>
<rect x="910.43" y="159.65" width="7.2" height="17.45" fill="none" stroke="#12a83a" stroke-width="0.9"/>
<path d="M925.38 153.75V163.75" stroke="#c24a4a" stroke-width="0.9"/>
<rect x="921.38" y="162.00" width="8" height="1.75" fill="#ff6b6b"/>
<path d="M936.73 151.25V153.25M936.73 157.50V159.50" stroke="#0e8a30" stroke-width="0.9"/>
<rect x="933.13" y="153.65" width="7.2" height="3.45" fill="none" stroke="#12a83a" stroke-width="0.9"/>
<path d="M944.57 155.50H951.57M948.07 155.50V163.75" stroke="#a8a8a8" stroke-width="1.1"/>
<path d="M959.42 140.00V140.00M959.42 151.75V151.75" stroke="#0e8a30" stroke-width="0.9"/>
<rect x="955.82" y="140.40" width="7.2" height="10.95" fill="none" stroke="#12a83a" stroke-width="0.9"/>
<rect x="15.40" y="438.00" width="4.6" height="17.00" fill="#136d9c"/>
<rect x="26.75" y="433.75" width="4.6" height="21.25" fill="#136d9c"/>
<rect x="38.09" y="435.00" width="4.6" height="20.00" fill="#136d9c"/>
<rect x="49.44" y="435.75" width="4.6" height="19.25" fill="#136d9c"/>
<rect x="60.78" y="441.75" width="4.6" height="13.25" fill="#136d9c"/>
<rect x="72.13" y="441.75" width="4.6" height="13.25" fill="#136d9c"/>
<rect x="83.48" y="430.75" width="4.6" height="24.25" fill="#136d9c"/>
<rect x="94.82" y="426.25" width="4.6" height="28.75" fill="#136d9c"/>
<rect x="106.17" y="431.75" width="4.6" height="23.25" fill="#136d9c"/>
<rect x="117.51" y="430.75" width="4.6" height="24.25" fill="#136d9c"/>
<rect x="128.86" y="429.50" width="4.6" height="25.50" fill="#136d9c"/>
<rect x="140.21" y="442.50" width="4.6" height="12.50" fill="#136d9c"/>
<rect x="151.55" y="445.00" width="4.6" height="10.00" fill="#136d9c"/>
<rect x="162.90" y="445.00" width="4.6" height="10.00" fill="#136d9c"/>
<rect x="174.24" y="430.50" width="4.6" height="24.50" fill="#136d9c"/>
<rect x="185.59" y="444.50" width="4.6" height="10.50" fill="#136d9c"/>
<rect x="196.94" y="436.75" width="4.6" height="18.25" fill="#136d9c"/>
<rect x="208.28" y="441.25" width="4.6" height="13.75" fill="#136d9c"/>
<rect x="219.63" y="437.00" width="4.6" height="18.00" fill="#136d9c"/>
<rect x="230.97" y="438.25" width="4.6" height="16.75" fill="#136d9c"/>
<rect x="242.32" y="431.75" width="4.6" height="23.25" fill="#136d9c"/>
<rect x="253.67" y="438.00" width="4.6" height="17.00" fill="#136d9c"/>
<rect x="265.01" y="443.75" width="4.6" height="11.25" fill="#136d9c"/>
<rect x="276.36" y="438.75" width="4.6" height="16.25" fill="#136d9c"/>
<rect x="287.70" y="437.00" width="4.6" height="18.00" fill="#136d9c"/>
<rect x="299.05" y="430.00" width="4.6" height="25.00" fill="#136d9c"/>
<rect x="310.40" y="442.00" width="4.6" height="13.00" fill="#136d9c"/>
<rect x="321.74" y="442.00" width="4.6" height="13.00" fill="#136d9c"/>
<rect x="333.09" y="443.75" width="4.6" height="11.25" fill="#136d9c"/>
<rect x="344.43" y="435.00" width="4.6" height="20.00" fill="#136d9c"/>
<rect x="355.78" y="443.75" width="4.6" height="11.25" fill="#136d9c"/>
<rect x="367.13" y="418.75" width="4.6" height="36.25" fill="#136d9c"/>
<rect x="378.47" y="430.50" width="4.6" height="24.50" fill="#136d9c"/>
<rect x="389.82" y="428.00" width="4.6" height="27.00" fill="#136d9c"/>
<rect x="401.16" y="432.50" width="4.6" height="22.50" fill="#136d9c"/>
<rect x="412.51" y="435.00" width="4.6" height="20.00" fill="#136d9c"/>
<rect x="423.86" y="420.50" width="4.6" height="34.50" fill="#136d9c"/>
<rect x="435.20" y="424.50" width="4.6" height="30.50" fill="#136d9c"/>
<rect x="446.55" y="435.00" width="4.6" height="20.00" fill="#136d9c"/>
<rect x="457.89" y="429.25" width="4.6" height="25.75" fill="#136d9c"/>
<rect x="469.24" y="440.50" width="4.6" height="14.50" fill="#136d9c"/>
<rect x="480.59" y="438.00" width="4.6" height="17.00" fill="#136d9c"/>
<rect x="491.93" y="442.00" width="4.6" height="13.00" fill="#136d9c"/>
<rect x="503.28" y="443.25" width="4.6" height="11.75" fill="#136d9c"/>
<rect x="514.62" y="443.75" width="4.6" height="11.25" fill="#136d9c"/>
<rect x="525.97" y="440.50" width="4.6" height="14.50" fill="#136d9c"/>
<rect x="537.32" y="442.50" width="4.6" height="12.50" fill="#136d9c"/>
<rect x="548.66" y="441.25" width="4.6" height="13.75" fill="#136d9c"/>
<rect x="560.01" y="437.00" width="4.6" height="18.00" fill="#136d9c"/>
<rect x="571.35" y="433.75" width="4.6" height="21.25" fill="#136d9c"/>
<rect x="582.70" y="435.75" width="4.6" height="19.25" fill="#136d9c"/>
<rect x="594.05" y="430.75" width="4.6" height="24.25" fill="#136d9c"/>
<rect x="605.39" y="435.75" width="4.6" height="19.25" fill="#136d9c"/>
<rect x="616.74" y="434.50" width="4.6" height="20.50" fill="#136d9c"/>
<rect x="628.08" y="427.50" width="4.6" height="27.50" fill="#136d9c"/>
<rect x="639.43" y="443.75" width="4.6" height="11.25" fill="#136d9c"/>
<rect x="650.78" y="440.00" width="4.6" height="15.00" fill="#136d9c"/>
<rect x="662.12" y="442.00" width="4.6" height="13.00" fill="#136d9c"/>
<rect x="673.47" y="443.00" width="4.6" height="12.00" fill="#136d9c"/>
<rect x="684.81" y="440.00" width="4.6" height="15.00" fill="#136d9c"/>
<rect x="696.16" y="445.00" width="4.6" height="10.00" fill="#136d9c"/>
<rect x="707.51" y="434.50" width="4.6" height="20.50" fill="#136d9c"/>
<rect x="718.85" y="447.00" width="4.6" height="8.00" fill="#136d9c"/>
<rect x="730.20" y="440.50" width="4.6" height="14.50" fill="#136d9c"/>
<rect x="741.54" y="435.00" width="4.6" height="20.00" fill="#136d9c"/>
<rect x="752.89" y="442.00" width="4.6" height="13.00" fill="#136d9c"/>
<rect x="764.24" y="427.00" width="4.6" height="28.00" fill="#136d9c"/>
<rect x="775.58" y="439.25" width="4.6" height="15.75" fill="#136d9c"/>
<rect x="786.93" y="443.75" width="4.6" height="11.25" fill="#136d9c"/>
<rect x="798.27" y="438.00" width="4.6" height="17.00" fill="#136d9c"/>
<rect x="809.62" y="428.00" width="4.6" height="27.00" fill="#136d9c"/>
<rect x="820.97" y="438.75" width="4.6" height="16.25" fill="#136d9c"/>
<rect x="832.31" y="442.50" width="4.6" height="12.50" fill="#136d9c"/>
<rect x="843.66" y="445.75" width="4.6" height="9.25" fill="#136d9c"/>
<rect x="855.00" y="443.75" width="4.6" height="11.25" fill="#136d9c"/>
<rect x="866.35" y="442.50" width="4.6" height="12.50" fill="#136d9c"/>
<rect x="877.70" y="440.50" width="4.6" height="14.50" fill="#136d9c"/>
<rect x="889.04" y="439.25" width="4.6" height="15.75" fill="#136d9c"/>
<rect x="900.39" y="446.75" width="4.6" height="8.25" fill="#136d9c"/>
<rect x="911.73" y="442.00" width="4.6" height="13.00" fill="#136d9c"/>
<rect x="923.08" y="448.00" width="4.6" height="7.00" fill="#136d9c"/>
<rect x="934.43" y="448.00" width="4.6" height="7.00" fill="#136d9c"/>
<rect x="945.77" y="450.00" width="4.6" height="5.00" fill="#136d9c"/>
<rect x="957.12" y="443.75" width="4.6" height="11.25" fill="#136d9c"/>
<path d="M17.5 515.5H959.5" stroke="#b040b4" stroke-width="1.1"/>
<path d="M17.50 507.50C21.10 507.50 32.72 507.70 40.00 507.50C47.28 507.30 55.80 506.65 63.00 506.25C70.20 505.85 79.56 505.32 85.00 505.00C90.44 504.68 93.32 504.73 97.00 504.25C100.68 503.77 104.32 502.80 108.00 502.00C111.68 501.20 116.32 500.09 120.00 499.25C123.68 498.41 127.48 497.55 131.00 496.75C134.52 495.95 138.32 495.01 142.00 494.25C145.68 493.49 150.32 492.60 154.00 492.00C157.68 491.40 161.48 490.82 165.00 490.50C168.52 490.18 172.32 490.00 176.00 490.00C179.68 490.00 184.32 490.30 188.00 490.50C191.68 490.70 195.48 490.93 199.00 491.25C202.52 491.57 206.48 492.02 210.00 492.50C213.52 492.98 217.32 493.77 221.00 494.25C224.68 494.73 229.32 494.86 233.00 495.50C236.68 496.14 240.48 497.41 244.00 498.25C247.52 499.09 251.32 499.95 255.00 500.75C258.68 501.55 263.32 502.41 267.00 503.25C270.68 504.09 274.32 505.12 278.00 506.00C281.68 506.88 286.32 508.03 290.00 508.75C293.68 509.47 297.48 510.18 301.00 510.50C304.52 510.82 306.56 510.91 312.00 510.75C317.44 510.59 327.80 509.94 335.00 509.50C342.20 509.06 351.56 508.40 357.00 508.00C362.44 507.60 365.32 507.00 369.00 507.00C372.68 507.00 374.56 507.60 380.00 508.00C385.44 508.40 397.56 508.86 403.00 509.50C408.44 510.14 408.56 511.24 414.00 512.00C419.44 512.76 431.56 513.77 437.00 514.25C442.44 514.73 442.56 514.96 448.00 515.00C453.44 515.04 465.56 514.90 471.00 514.50C476.44 514.10 478.00 513.14 482.00 512.50C486.00 511.86 492.32 510.90 496.00 510.50C499.68 510.10 499.88 510.56 505.00 510.00C510.12 509.44 520.64 507.88 528.00 507.00C535.36 506.12 543.64 505.14 551.00 504.50C558.36 503.86 566.80 503.72 574.00 503.00C581.20 502.28 590.56 500.88 596.00 500.00C601.44 499.12 604.32 498.42 608.00 497.50C611.68 496.58 613.56 495.53 619.00 494.25C624.44 492.97 636.56 490.66 642.00 489.50C647.44 488.34 647.56 488.00 653.00 487.00C658.44 486.00 670.56 484.05 676.00 483.25C681.44 482.45 683.48 482.32 687.00 482.00C690.52 481.68 692.56 481.25 698.00 481.25C703.44 481.25 714.92 481.68 721.00 482.00C727.08 482.32 730.56 482.85 736.00 483.25C741.44 483.65 748.28 484.70 755.00 484.50C761.72 484.30 770.80 482.72 778.00 482.00C785.20 481.28 792.80 480.32 800.00 480.00C807.20 479.68 815.64 479.80 823.00 480.00C830.36 480.20 838.80 480.65 846.00 481.25C853.20 481.85 862.56 483.23 868.00 483.75C873.44 484.27 876.32 484.10 880.00 484.50C883.68 484.90 885.56 485.45 891.00 486.25C896.44 487.05 906.64 488.58 914.00 489.50C921.36 490.42 929.72 491.44 937.00 492.00C944.28 492.56 955.90 492.84 959.50 493.00" stroke="#c2ad7e" stroke-width="1.1" fill="none"/>
<path d="M17.50 506.75C19.34 507.15 25.40 509.21 29.00 509.25C32.60 509.29 36.32 507.96 40.00 507.00C43.68 506.04 48.32 503.85 52.00 503.25C55.68 502.65 57.72 503.29 63.00 503.25C68.28 503.21 79.56 503.52 85.00 503.00C90.44 502.48 93.32 501.28 97.00 500.00C100.68 498.72 104.32 496.92 108.00 495.00C111.68 493.08 116.32 489.52 120.00 488.00C123.68 486.48 127.48 486.10 131.00 485.50C134.52 484.90 138.32 484.33 142.00 484.25C145.68 484.17 150.32 484.88 154.00 485.00C157.68 485.12 161.48 484.40 165.00 485.00C168.52 485.60 172.32 487.55 176.00 488.75C179.68 489.95 184.32 491.58 188.00 492.50C191.68 493.42 195.48 493.78 199.00 494.50C202.52 495.22 206.48 496.32 210.00 497.00C213.52 497.68 217.32 497.87 221.00 498.75C224.68 499.63 229.32 501.18 233.00 502.50C236.68 503.82 240.48 505.60 244.00 507.00C247.52 508.40 251.32 509.89 255.00 511.25C258.68 512.61 263.32 514.18 267.00 515.50C270.68 516.82 274.32 518.58 278.00 519.50C281.68 520.42 286.32 521.57 290.00 521.25C293.68 520.93 297.48 518.90 301.00 517.50C304.52 516.10 308.48 513.90 312.00 512.50C315.52 511.10 319.32 509.75 323.00 508.75C326.68 507.75 329.56 506.77 335.00 506.25C340.44 505.73 351.56 505.50 357.00 505.50C362.44 505.50 365.32 505.73 369.00 506.25C372.68 506.77 376.48 507.75 380.00 508.75C383.52 509.75 387.32 511.30 391.00 512.50C394.68 513.70 399.32 515.13 403.00 516.25C406.68 517.37 410.48 519.10 414.00 519.50C417.52 519.90 421.32 519.15 425.00 518.75C428.68 518.35 433.32 517.20 437.00 517.00C440.68 516.80 444.48 518.02 448.00 517.50C451.52 516.98 455.32 514.83 459.00 513.75C462.68 512.67 467.32 511.75 471.00 510.75C474.68 509.75 478.32 508.34 482.00 507.50C485.68 506.66 490.32 506.10 494.00 505.50C497.68 504.90 501.32 504.51 505.00 503.75C508.68 502.99 513.32 501.15 517.00 500.75C520.68 500.35 524.32 501.09 528.00 501.25C531.68 501.41 536.32 502.15 540.00 501.75C543.68 501.35 547.48 499.11 551.00 498.75C554.52 498.39 558.32 499.38 562.00 499.50C565.68 499.62 570.32 499.90 574.00 499.50C577.68 499.10 581.48 497.84 585.00 497.00C588.52 496.16 592.32 495.57 596.00 494.25C599.68 492.93 604.32 490.43 608.00 488.75C611.68 487.07 615.48 485.43 619.00 483.75C622.52 482.07 626.32 479.65 630.00 478.25C633.68 476.85 638.32 475.80 642.00 475.00C645.68 474.20 649.48 473.37 653.00 473.25C656.52 473.13 660.32 473.65 664.00 474.25C667.68 474.85 672.32 476.16 676.00 477.00C679.68 477.84 683.48 478.82 687.00 479.50C690.52 480.18 694.32 480.65 698.00 481.25C701.68 481.85 706.32 482.57 710.00 483.25C713.68 483.93 716.84 485.10 721.00 485.50C725.16 485.90 730.56 485.75 736.00 485.75C741.44 485.75 750.20 486.22 755.00 485.50C759.80 484.78 762.32 482.53 766.00 481.25C769.68 479.97 774.32 478.22 778.00 477.50C781.68 476.78 785.48 476.87 789.00 476.75C792.52 476.63 796.48 476.31 800.00 476.75C803.52 477.19 807.32 478.90 811.00 479.50C814.68 480.10 819.32 480.02 823.00 480.50C826.68 480.98 830.32 481.70 834.00 482.50C837.68 483.30 842.32 484.90 846.00 485.50C849.68 486.10 853.48 486.01 857.00 486.25C860.52 486.49 864.32 486.80 868.00 487.00C871.68 487.20 876.32 486.82 880.00 487.50C883.68 488.18 887.48 490.05 891.00 491.25C894.52 492.45 898.32 494.20 902.00 495.00C905.68 495.80 910.32 495.97 914.00 496.25C917.68 496.53 919.56 496.67 925.00 496.75C930.44 496.83 942.48 497.11 948.00 496.75C953.52 496.39 957.66 494.86 959.50 494.50" stroke="#14b4b8" stroke-width="1.1" fill="none"/>
<path d="M802.2 129.6h4.2L800.7 136Z" fill="#e4e4e4"/>
<rect x="798" y="118.3" width="36.2" height="11.6" rx="2.4" fill="#e9e9e9"/>
<text x="801.3" y="127.2" font-size="7" fill="#555" textLength="29.5" lengthAdjust="spacing">Hi: 23.08</text>
<path d="M29.5 308.8L32.5 315" stroke="#ccc" stroke-width="0.8"/>
<rect x="25.5" y="315" width="38" height="11.5" rx="2.2" fill="#e9e9e9"/>
<text x="29.5" y="323.6" font-size="7" fill="#555" textLength="30.5" lengthAdjust="spacing">Lo: 13.95</text>
<text x="427.5" y="377.4" font-size="6.6" font-family="Liberation Mono, monospace" font-weight="bold" fill="#12a83a" textLength="20" lengthAdjust="spacing">$0.07</text>
<circle cx="437.1" cy="382.9" r="5" fill="#f06262"/><path d="M435 382.4h4.2v2.6h-4.2z" fill="none" stroke="#b02828" stroke-width="0.8"/><path d="M434 381.6l1-1.2h4.2l1 1.2" fill="none" stroke="#b02828" stroke-width="0.9"/>
<circle cx="437.1" cy="393.7" r="5" fill="#1f8ee6"/><path d="M435.7 392.2a1.5 1.5 0 1 1 2.8 0l-0.5 3.2h-1.8z" fill="none" stroke="#0c4c98" stroke-width="0.8"/>
<g fill="none" stroke="#444" stroke-linecap="round"><path d="M21 116L29.6 130.2L38.4 115.6" stroke-width="1.7"/><path d="M42.2 115.6L35.2 130.2" stroke-width="2.1"/><path d="M45.6 115.6L39 130.2" stroke-width="1.6"/><path d="M45 115.6q7.6 0.2 4 6.4q-2.8 2.8-6.8 2.2" stroke-width="1.7"/><path d="M25.5 111.5q11-8 24.5 3.5" stroke-width="0.8"/></g>
<path d="M22.8 106.2l1.4 -2.6l1 2.8l2.6 -1.2l-1.2 3l-2 2.4l-3.2 -0.4l-3.2 -1.8l2.8 -0.4l-2.4 -2.4z" fill="#444"/>
<text x="41.8" y="130.6" font-size="4.6" fill="#444" font-family="Liberation Sans, Noto Sans CJK SC, sans-serif" textLength="14" lengthAdjust="spacingAndGlyphs">唯品会</text>
<text x="23.8" y="136.4" font-size="5.4" fill="#444" textLength="32.8" lengthAdjust="spacingAndGlyphs">vipshop.com</text>
</svg>
<span class="t" style="left:12.50px;top:404.70px;font-size:8.00px;line-height:10px;color:#f2f2f2;transform:scaleX(0.974);">Volume</span>
<div class="r" style="left:42.00px;top:404.00px;width:1.00px;height:11.50px;background:#3c3c3c;"></div>
<span class="t" style="left:46.00px;top:404.70px;font-size:8.00px;line-height:10px;color:#9a9a9a;transform:scaleX(0.885);">7,188,274</span>
<div class="r" style="left:80.00px;top:404.00px;width:1.00px;height:11.50px;background:#3c3c3c;"></div>
<span class="t" style="left:12.50px;top:460.20px;font-size:8.00px;line-height:10px;color:#14b4b8;transform:scaleX(0.889);">MACD (12, 26, 9, EXPONENTIAL, no)</span>
<div class="r" style="left:136.00px;top:460.00px;width:1.00px;height:10.50px;background:#3c3c3c;"></div>
<span class="t" style="left:139.50px;top:460.20px;font-size:8.00px;line-height:10px;color:#14b4b8;transform:scaleX(0.899);">0.699533</span>
<div class="r" style="left:172.00px;top:460.00px;width:1.00px;height:10.50px;background:#3c3c3c;"></div>
<span class="t" style="left:175.50px;top:460.20px;font-size:8.00px;line-height:10px;color:#c2ad7e;transform:scaleX(0.899);">0.477415</span>
<div class="r" style="left:207.50px;top:460.00px;width:1.00px;height:10.50px;background:#3c3c3c;"></div>
<span class="t" style="left:211.50px;top:460.20px;font-size:8.00px;line-height:10px;color:#c040c0;">0</span>
<div class="r" style="left:218.50px;top:460.00px;width:1.00px;height:10.50px;background:#3c3c3c;"></div>
<span class="t" style="left:34.92px;top:524.20px;font-size:8.00px;line-height:10px;color:#a8a8a8;transform:scaleX(0.971);">4/6</span>
<span class="t" style="left:80.30px;top:524.20px;font-size:8.00px;line-height:10px;color:#a8a8a8;transform:scaleX(0.963);">4/13</span>
<span class="t" style="left:137.03px;top:524.20px;font-size:8.00px;line-height:10px;color:#a8a8a8;transform:scaleX(0.963);">4/20</span>
<span class="t" style="left:193.76px;top:524.20px;font-size:8.00px;line-height:10px;color:#a8a8a8;transform:scaleX(0.963);">4/27</span>
<span class="t" style="left:250.49px;top:524.20px;font-size:8.00px;line-height:10px;color:#a8a8a8;transform:scaleX(0.971);">5/4</span>
<span class="t" style="left:307.22px;top:524.20px;font-size:8.00px;line-height:10px;color:#a8a8a8;">5/11</span>
<span class="t" style="left:363.95px;top:524.20px;font-size:8.00px;line-height:10px;color:#a8a8a8;transform:scaleX(0.963);">5/18</span>
<span class="t" style="left:420.68px;top:524.20px;font-size:8.00px;line-height:10px;color:#a8a8a8;transform:scaleX(0.963);">5/25</span>
<span class="t" style="left:466.07px;top:524.20px;font-size:8.00px;line-height:10px;color:#a8a8a8;transform:scaleX(0.971);">6/1</span>
<span class="t" style="left:522.80px;top:524.20px;font-size:8.00px;line-height:10px;color:#a8a8a8;transform:scaleX(0.971);">6/8</span>
<span class="t" style="left:579.53px;top:524.20px;font-size:8.00px;line-height:10px;color:#a8a8a8;transform:scaleX(0.963);">6/15</span>
<span class="t" style="left:636.26px;top:524.20px;font-size:8.00px;line-height:10px;color:#a8a8a8;transform:scaleX(0.963);">6/22</span>
<span class="t" style="left:692.99px;top:524.20px;font-size:8.00px;line-height:10px;color:#a8a8a8;transform:scaleX(0.963);">6/29</span>
<span class="t" style="left:738.37px;top:524.20px;font-size:8.00px;line-height:10px;color:#a8a8a8;transform:scaleX(0.971);">7/6</span>
<span class="t" style="left:795.10px;top:524.20px;font-size:8.00px;line-height:10px;color:#a8a8a8;transform:scaleX(0.963);">7/13</span>
<span class="t" style="left:851.83px;top:524.20px;font-size:8.00px;line-height:10px;color:#a8a8a8;transform:scaleX(0.963);">7/20</span>
<span class="t" style="left:908.56px;top:524.20px;font-size:8.00px;line-height:10px;color:#a8a8a8;transform:scaleX(0.963);">7/27</span>
<div class="r" style="left:612.00px;top:523.30px;width:18.40px;height:9.50px;background:#b9b9b9;border-radius:2px;"></div>
<span class="t" style="left:614.00px;top:523.30px;font-size:8.00px;line-height:10px;color:#505050;transform:scaleX(0.950);">6/17</span>
<span class="t" style="left:969.40px;top:97.20px;font-size:8.00px;line-height:10px;color:#b4b4b4;transform:scaleX(0.864);">25.48</span>
<span class="t" style="left:969.40px;top:122.00px;font-size:8.00px;line-height:10px;color:#b4b4b4;transform:scaleX(0.864);">23.71</span>
<span class="t" style="left:969.40px;top:146.80px;font-size:8.00px;line-height:10px;color:#b4b4b4;transform:scaleX(0.864);">22.07</span>
<span class="t" style="left:969.40px;top:171.60px;font-size:8.00px;line-height:10px;color:#b4b4b4;transform:scaleX(0.864);">20.54</span>
<span class="t" style="left:969.40px;top:196.40px;font-size:8.00px;line-height:10px;color:#b4b4b4;transform:scaleX(1.111);">19.1</span>
<span class="t" style="left:969.40px;top:221.20px;font-size:8.00px;line-height:10px;color:#b4b4b4;transform:scaleX(0.864);">17.78</span>
<span class="t" style="left:969.40px;top:246.00px;font-size:8.00px;line-height:10px;color:#b4b4b4;transform:scaleX(0.864);">16.55</span>
<span class="t" style="left:969.40px;top:270.80px;font-size:8.00px;line-height:10px;color:#b4b4b4;transform:scaleX(0.864);">15.40</span>
<span class="t" style="left:969.40px;top:295.60px;font-size:8.00px;line-height:10px;color:#b4b4b4;transform:scaleX(0.864);">14.33</span>
<span class="t" style="left:969.40px;top:320.40px;font-size:8.00px;line-height:10px;color:#b4b4b4;transform:scaleX(0.864);">13.34</span>
<span class="t" style="left:969.40px;top:345.20px;font-size:8.00px;line-height:10px;color:#b4b4b4;transform:scaleX(0.864);">12.41</span>
<span class="t" style="left:969.40px;top:370.00px;font-size:8.00px;line-height:10px;color:#b4b4b4;transform:scaleX(0.890);">11.55</span>
<span class="t" style="left:969.40px;top:394.80px;font-size:8.00px;line-height:10px;color:#b4b4b4;transform:scaleX(0.864);">10.75</span>
<div class="r" style="left:968.80px;top:134.80px;width:22.40px;height:9.00px;background:#1fc444;border-radius:2px;"></div>
<span class="t" style="left:971.00px;top:134.50px;font-size:8.00px;line-height:10px;color:#f4fff4;transform:scaleX(0.894);font-style:italic;text-decoration:underline;">22.77</span>
<div class="r" style="left:968.80px;top:159.40px;width:22.40px;height:8.20px;background:#e8b800;border-radius:2px;"></div>
<span class="t" style="left:971.00px;top:158.70px;font-size:8.00px;line-height:10px;color:#4a3a00;transform:scaleX(0.894);">21.26</span>
<div class="r" style="left:968.80px;top:185.80px;width:22.40px;height:8.10px;background:#6ab4e8;border-radius:2px;"></div>
<span class="t" style="left:971.00px;top:185.05px;font-size:8.00px;line-height:10px;color:#123a5a;transform:scaleX(0.894);">19.65</span>
<div class="r" style="left:968.80px;top:198.70px;width:12.50px;height:8.10px;background:#bdbdbd;border-radius:2px;"></div>
<span class="t" style="left:971.00px;top:197.95px;font-size:8.00px;line-height:10px;color:#333;transform:scaleX(0.899);">19</span>
<div class="r" style="left:968.80px;top:268.80px;width:22.40px;height:8.40px;background:#e878f0;border-radius:2px;"></div>
<span class="t" style="left:971.00px;top:268.20px;font-size:8.00px;line-height:10px;color:#4a1a50;transform:scaleX(0.894);">15.47</span>
<div class="r" style="left:968.80px;top:489.30px;width:31.20px;height:8.50px;background:#10d4dc;border-radius:2px;"></div>
<span class="t" style="left:971.00px;top:488.75px;font-size:8.00px;line-height:10px;color:#044;transform:scaleX(0.923);">0.58404</span>
<div class="r" style="left:968.80px;top:511.00px;width:8.20px;height:8.20px;background:#e050e0;border-radius:2px;"></div>
<span class="t" style="left:971.00px;top:510.30px;font-size:8.00px;line-height:10px;color:#fff;transform:scaleX(0.831);">0</span>
<div class="r" style="left:967.00px;top:401.70px;width:40.00px;height:2.80px;background:#080808;"></div>
<span class="t" style="left:969.40px;top:423.60px;font-size:8.00px;line-height:10px;color:#b4b4b4;transform:scaleX(0.854);">10</span>
<span class="t" style="left:969.40px;top:437.40px;font-size:8.00px;line-height:10px;color:#b4b4b4;">5</span>
<span class="t" style="left:969.40px;top:451.50px;font-size:8.00px;line-height:10px;color:#b4b4b4;clip-path:inset(0 0 6px 0);">0</span>
<span class="t" style="left:969.40px;top:474.00px;font-size:8.00px;line-height:10px;color:#b4b4b4;">1</span>
<span class="t" style="left:997.25px;top:453.80px;font-size:7.50px;line-height:9px;color:#a0a0a0;transform:rotate(-90deg) scaleX(1.054);">&lt;millions&gt;</span>
<div class="r" style="left:1007.50px;top:76.60px;width:13.80px;height:31.90px;background:#4a4a4a;"></div>
<div class="r" style="left:1007.50px;top:108.00px;width:13.80px;height:1.00px;background:#606060;"></div>
<span class="t" style="left:1010.20px;top:103.90px;font-size:8.00px;line-height:10px;color:#d2d2d2;transform:rotate(-90deg) scaleX(0.929);">Trade</span>
<div class="r" style="left:1007.50px;top:108.50px;width:13.80px;height:67.50px;background:#4a4a4a;"></div>
<div class="r" style="left:1007.50px;top:175.50px;width:13.80px;height:1.00px;background:#606060;"></div>
<span class="t" style="left:1010.20px;top:171.30px;font-size:8.00px;line-height:10px;color:#d2d2d2;transform:rotate(-90deg) scaleX(0.917);">Times And Sales</span>
<div class="r" style="left:1007.50px;top:176.00px;width:13.80px;height:58.30px;background:#4a4a4a;"></div>
<div class="r" style="left:1007.50px;top:233.80px;width:13.80px;height:1.00px;background:#606060;"></div>
<span class="t" style="left:1010.20px;top:229.40px;font-size:8.00px;line-height:10px;color:#d2d2d2;transform:rotate(-90deg) scaleX(0.938);">Active Trader</span>
<div class="r" style="left:1007.50px;top:234.30px;width:13.80px;height:52.70px;background:#4a4a4a;"></div>
<div class="r" style="left:1007.50px;top:286.50px;width:13.80px;height:1.00px;background:#606060;"></div>
<span class="t" style="left:1010.20px;top:282.00px;font-size:8.00px;line-height:10px;color:#d2d2d2;transform:rotate(-90deg) scaleX(0.973);">Big Buttons</span>
<div class="r" style="left:1007.50px;top:287.00px;width:13.80px;height:30.80px;background:#666;"></div>
<div class="r" style="left:1007.50px;top:317.30px;width:13.80px;height:1.00px;background:#606060;"></div>
<span class="t" style="left:1010.20px;top:313.30px;font-size:8.00px;line-height:10px;color:#d2d2d2;transform:rotate(-90deg) scaleX(0.935);">Chart</span>
<div class="r" style="left:1007.50px;top:317.80px;width:13.80px;height:57.20px;background:#4a4a4a;"></div>
<div class="r" style="left:1007.50px;top:374.50px;width:13.80px;height:1.00px;background:#606060;"></div>
<span class="t" style="left:1010.20px;top:370.00px;font-size:8.00px;line-height:10px;color:#d2d2d2;transform:rotate(-90deg) scaleX(0.891);">Phase Scores</span>
<div class="r" style="left:1007.50px;top:375.00px;width:13.80px;height:51.00px;background:#4a4a4a;"></div>
<div class="r" style="left:1007.50px;top:425.50px;width:13.80px;height:1.00px;background:#606060;"></div>
<span class="t" style="left:1010.20px;top:420.80px;font-size:8.00px;line-height:10px;color:#d2d2d2;transform:rotate(-90deg) scaleX(0.945);">Dashboard</span>
<div class="r" style="left:1007.50px;top:426.00px;width:13.80px;height:36.80px;background:#4a4a4a;"></div>
<div class="r" style="left:1007.50px;top:462.30px;width:13.80px;height:1.00px;background:#606060;"></div>
<span class="t" style="left:1010.20px;top:458.20px;font-size:8.00px;line-height:10px;color:#d2d2d2;transform:rotate(-90deg) scaleX(0.911);">Level II</span>
<div class="r" style="left:1007.50px;top:462.80px;width:13.80px;height:47.50px;background:#4a4a4a;"></div>
<div class="r" style="left:1007.50px;top:509.80px;width:13.80px;height:1.00px;background:#606060;"></div>
<span class="t" style="left:1010.20px;top:506.00px;font-size:8.00px;line-height:10px;color:#d2d2d2;transform:rotate(-90deg) scaleX(0.940);">Live News</span>
<div class="r" style="left:59.00px;top:536.00px;width:20.00px;height:11.00px;background:#4a4a4a;"></div>
<span class="t" style="left:931.75px;top:536.20px;font-size:8.00px;line-height:10px;color:#c8c8c8;transform:scaleX(0.961);">Drawing set: Default</span>
<svg class="r" style="left:1004.50px;top:544.00px" width="2.7" height="2.7"><path d="M2.7 0V2.7H0Z" fill="#eee"/></svg>
<div class="r" style="left:0.00px;top:546.50px;width:1024.00px;height:1.90px;background:#2b2b2b;"></div>
<div class="r" style="left:0.00px;top:548.40px;width:1024.00px;height:27.60px;background:#1a1a1a;background:linear-gradient(90deg,#1c1c1c 0%,#1c1c1c 78%,#1a2e1f 100%);"></div>
<div class="r" style="left:32.30px;top:549.20px;width:229.20px;height:26.80px;background:#f2f2f2;"></div>
<span class="t" style="left:59.40px;top:556.60px;font-size:10.00px;line-height:12px;color:#4a4a4a;transform:scaleX(0.974);">Type here to search</span>
<div class="r" style="left:592.30px;top:548.00px;width:32.50px;height:28.00px;background:#3c3c3c;"></div>
<div class="r" style="left:330.50px;top:574.30px;width:26.80px;height:1.70px;background:#7ab8e8;"></div>
<div class="r" style="left:592.30px;top:574.30px;width:32.50px;height:1.70px;background:#7ab8e8;"></div>
<div class="r" style="left:628.00px;top:574.30px;width:26.80px;height:1.70px;background:#7ab8e8;"></div>
<span class="t" style="left:953.00px;top:551.60px;font-size:8.00px;line-height:10px;color:#e8e8e8;transform:scaleX(0.923);">4:49 PM</span>
<span class="t" style="left:950.50px;top:564.00px;font-size:8.00px;line-height:10px;color:#e8e8e8;transform:scaleX(1.027);">8/2/2020</span>
<svg class="r" style="left:0;top:0" width="1024" height="576" viewBox="0 0 1024 576">
<path d="M10.6 558.6l4.6-0.7v4.3h-4.6zM15.9 557.8l5.6-0.9v5.3h-5.6zM10.6 562.9h4.6v4.3l-4.6-0.7zM15.9 562.9h5.6v5.3l-5.6-0.9z" fill="#fff"/>
<circle cx="47.3" cy="558.8" r="3.4" fill="none" stroke="#333" stroke-width="1.1"/><path d="M45 561.4L40.5 566.5" stroke="#333" stroke-width="1.2"/>
<circle cx="277.2" cy="562.3" r="4.3" fill="none" stroke="#fff" stroke-width="1.6"/>
<path d="M305.5 558.5h6.5v7.5h-6.5zM303.6 559.5v5.5M314.6 559.5v1.5M314.6 563.5v1.5" fill="none" stroke="#fff" stroke-width="1.1"/><path d="M304 560.3h9M304 564.2h9" stroke="#fff" stroke-width="0.9"/>
<circle cx="343.9" cy="562.2" r="8.3" fill="#1f8ce2"/><path d="M336.400 559q3.600-5.800 10-4.800q-5 1.600-6.800 5.600q-1.600 0.200-3.200-0.800z" fill="#3cb4ec"/><path d="M345 554q6.200 0.400 7.200 7q0 4.400-3.800 5.400q-3 0.200-2.800-2.200q2.400-2.400 0.600-5.400q-1.800-2.400-5.200-2.400q1.400-2 4-2.400z" fill="#4ccc74"/><path d="M340.400 560.200q-2.400 4.800 1.800 8.600q4 2.400 8-0.600q-4.800 1.400-7-1.800q-1.600-2.800 0.600-5.200q-1.600-1.400-3.400-1z" fill="#0d4e9e"/><circle cx="346" cy="562.800" r="1.800" fill="#1c1c1c"/>
<path d="M369 556.5h5.5l1.5 1.6h8.7v10.5h-15.7z" fill="#f6c445"/><path d="M369 559.8h15.7v8.8h-15.7z" fill="#fbd86a"/><path d="M373 563.5h7.6v5.1h-7.6z" fill="#3a8fd8"/>
<path d="M402 558.5h15v10.2h-15z" fill="#f4f4f4"/><path d="M406.2 558.5v-1.6q3.3-3 6.6 0v1.6" fill="none" stroke="#f4f4f4" stroke-width="1"/><rect x="406.3" y="560.6" width="2.8" height="2.8" fill="#f25022"/><rect x="409.9" y="560.6" width="2.8" height="2.8" fill="#7fba00"/><rect x="406.3" y="564.2" width="2.8" height="2.8" fill="#00a4ef"/><rect x="409.9" y="564.2" width="2.8" height="2.8" fill="#ffb900"/>
<path d="M434.8 560.5l8.1-5l8.1 5v8.3h-16.2z" fill="#1d7cd6"/><path d="M436.3 558.3h13.2v6h-13.2z" fill="#e8f2fc"/><path d="M434.8 560.8l8.1 4.8l8.1-4.8v8h-16.2z" fill="#2f9bf0"/>
<rect x="468" y="554.3" width="16" height="16" fill="#f6f6f6"/><text x="469.3" y="559.4" font-size="3.6" font-weight="bold" fill="#222" textLength="13.2" lengthAdjust="spacingAndGlyphs">amazon</text><path d="M471 561.3q5 2.2 10 0" stroke="#f90" stroke-width="0.8" fill="none"/><path d="M469.5 563l1.5 4.6h10l1.6-4z" fill="#4a90c8"/><circle cx="472.4" cy="569" r="0.9" fill="#2a6aa0"/><circle cx="479.6" cy="569" r="0.9" fill="#2a6aa0"/>
<rect x="501" y="554.3" width="16.3" height="16" rx="2.2" fill="#1b3f80"/><text x="504.3" y="566" font-size="9.6" font-weight="bold" fill="#fff">B</text><circle cx="512.7" cy="565.2" r="0.95" fill="#39b0ee"/>
<path d="M538 555.5l4 2.6l-4 2.6l-4-2.6zM546 555.5l4 2.6l-4 2.6l-4-2.6zM538 560.7l4 2.6l-4 2.6l-4-2.6zM546 560.7l4 2.6l-4 2.6l-4-2.6zM538 566.6l4-2.5l4 2.5l-4 2.6z" fill="#fff"/>
<path d="M569 558l7.2-3.6l4.6 1.4v12.6l-4.6 1.4l-7.2-3z" fill="#e8432a"/><path d="M571.6 559.4l4.6-1.4v8.6l-4.6-0.9z" fill="#1b1b1b"/><path d="M576.2 554.4l4.6 1.4v12.6l-4.6 1.4z" fill="#f2702e"/>
<rect x="599.8" y="554.3" width="16.2" height="16" rx="1.5" fill="#176a2c"/><path d="M607.9 562.3L602.5 568.6M607.9 562.3L613.6 567.6M607.9 562.3L613.4 557M607.9 562.3L603 556.5M607.9 562.3L608.4 555.2M607.9 562.3L607.2 569.6M607.9 562.3L601 562.6M607.9 562.3L614.8 561.6" stroke="#74e04a" stroke-width="1.3" stroke-linecap="round"/>
<circle cx="641" cy="562.2" r="8" fill="#d81e1e" stroke="#e6a23a" stroke-width="0.9"/><text x="635.2" y="565.3" font-size="9" font-weight="bold" fill="#fff" textLength="11.6" lengthAdjust="spacingAndGlyphs">tw</text>
<path d="M868.3 564l3.8-3.8l3.8 3.8" fill="none" stroke="#eee" stroke-width="1.1"/>
<path d="M885 565.5h7q2.2-0.3 1.6-2.4q-0.6-1.3-2-1.2q-0.6-2.6-3.2-2.2q-1.6 0.3-2.2 1.8q-2.2 0-2.4 2q0 1.6 1.2 2z" fill="#e8e8e8"/>
<path d="M899.5 559.5h8.5v5.5h-8.5zM908 561h1.2v2.5h-1.2z" fill="#e0e0e0"/><path d="M899 558v3" stroke="#e0e0e0" stroke-width="1.1"/>
<path d="M917 566a8 8 0 0 1 8-8M919 566a6 6 0 0 1 6-6M921.2 566a3.8 3.8 0 0 1 3.8-3.8" fill="none" stroke="#ddd" stroke-width="0.9"/><circle cx="924.4" cy="565.6" r="0.9" fill="#ddd"/>
<path d="M931 560.6h2.2l2.8-2.6v8.4l-2.8-2.6h-2.2z" fill="none" stroke="#ddd" stroke-width="0.9"/><path d="M937.5 560a3 3 0 0 1 0 4.4M939.3 558.4a5.4 5.4 0 0 1 0 7.6" fill="none" stroke="#ddd" stroke-width="0.8"/>
<path d="M997.3 557h10.4v8.2h-3.4l-1.8 2.2l-1.8-2.2h-3.4z" fill="none" stroke="#eee" stroke-width="1"/>
<path d="M727 16.2L727.2 8.4M727 13L723.4 16.6M727 13L730.8 16.4M727.2 11L724.6 9.6M727.2 11L730 9.4M724.4 13.2L723.2 12M729.8 13L731.2 12" stroke="#1e8a4c" stroke-width="0.9" fill="none" stroke-linecap="round"/>
<path d="M793.4 8.8h10.4v7.2h-10.4z" fill="none" stroke="#e0e0e0" stroke-width="1"/><path d="M793.6 9.4l5 4l5-4" fill="none" stroke="#e0e0e0" stroke-width="0.9"/>
<path d="M853.8 13.4v-1.2a3.4 3.6 0 0 1 6.8 0v1.2" fill="none" stroke="#e8e8e8" stroke-width="1"/><path d="M853.3 11.6h1.3v3.4h-1.3zM859.8 11.6h1.3v3.4h-1.3z" fill="#e8e8e8"/><path d="M860.5 15q-0.4 1.8-2.8 1.9" fill="none" stroke="#e8e8e8" stroke-width="0.8"/>
<circle cx="929.70" cy="12.60" r="2.20" fill="none" stroke="#f0f0f0" stroke-width="1.58"/><path d="M932.43 12.60L934.10 12.60M931.63 14.53L932.81 15.71M929.70 15.33L929.70 17.00M927.77 14.53L926.59 15.71M926.97 12.60L925.30 12.60M927.77 10.67L926.59 9.49M929.70 9.87L929.70 8.20M931.63 10.67L932.81 9.49" stroke="#f0f0f0" stroke-width="1.50"/>
<circle cx="1011.40" cy="26.70" r="2.20" fill="none" stroke="#f0f0f0" stroke-width="1.58"/><path d="M1014.13 26.70L1015.80 26.70M1013.33 28.63L1014.51 29.81M1011.40 29.43L1011.40 31.10M1009.47 28.63L1008.29 29.81M1008.67 26.70L1007.00 26.70M1009.47 24.77L1008.29 23.59M1011.40 23.97L1011.40 22.30M1013.33 24.77L1014.51 23.59" stroke="#f0f0f0" stroke-width="1.50"/>
<path d="M971.6 13.4h5.6" stroke="#8a8a8a" stroke-width="1"/><path d="M987.2 9.8h5.8v4h-5.8z" fill="none" stroke="#8a8a8a" stroke-width="0.9"/><path d="M987.2 10.2h5.8" stroke="#8a8a8a" stroke-width="1.3"/><path d="M1005.8 8.6l5.6 5.8M1011.4 8.6l-5.6 5.8" stroke="#9c4242" stroke-width="1.1"/>
<circle cx="969.2" cy="40.4" r="3.8" fill="none" stroke="#e4e4e4" stroke-width="0.9"/><path d="M969.2 38v2.6h2" fill="none" stroke="#e4e4e4" stroke-width="0.8"/><path d="M961.4 40.6h5.6l-2.8 3.4z" fill="#f0f0f0"/><path d="M964.2 40.8q0-4.8 5-5.4" fill="none" stroke="#f0f0f0" stroke-width="1.5"/>
<path d="M967 48.4h15.6v10h-15.6z" fill="none" stroke="#b8b8b0" stroke-width="0.9"/>
<path d="M1007.40 51.00h1.2M1010.00 51.00h5.4M1007.40 53.90h1.2M1010.00 53.90h5.4M1007.40 56.80h1.2M1010.00 56.80h5.4" stroke="#e8e8e8" stroke-width="1.1"/>
<path d="M1007.00 66.30h1.2M1009.60 66.30h5.4M1007.00 69.20h1.2M1009.60 69.20h5.4M1007.00 72.10h1.2M1009.60 72.10h5.4" stroke="#e8e8e8" stroke-width="1.1"/>
<path d="M16.4 58v-2.2M18.7 58v-4M21 58v-5.8M23.4 58v-8" stroke="#e03a2a" stroke-width="1.3"/>
<path d="M63.2 49.2h3.6v4.6h-3.6zM68.4 49.2h4v2.2h-4zM63.2 55.2h3.6v2.8h-3.6zM68.4 52.8h4v5.2h-4z" fill="#62b0f4"/>
<rect x="133.3" y="49.4" width="7.8" height="7.8" rx="0.8" fill="none" stroke="#2a8adc" stroke-width="1.1"/><path d="M134.8 51.6h4.8M134.8 53.4h4.8M134.8 55.2h2.2M138.2 55.2h1.4" stroke="#2a8adc" stroke-width="0.9"/>
<path d="M64.6 67.2h5.4l-2.7 3.2z" fill="#e0e0e0"/>
<path d="M656.4 64.8h-2.8v7.2h8.4v-2.4" fill="none" stroke="#dcdcdc" stroke-width="1"/><path d="M655.8 70q0.6-4.2 4.6-4.2v-1.8l3.6 3l-3.6 3v-1.8q-2.6-0.2-4.6 1.8z" fill="#f0f0f0"/>
<path d="M704 65h-4.4v7h7.8v-2" fill="none" stroke="#dcdcdc" stroke-width="1"/><path d="M699.6 65.6h4" stroke="#dcdcdc" stroke-width="1.6"/><circle cx="707" cy="66.6" r="2.7" fill="#f0f0f0"/><path d="M707 65v1.8h1.2" stroke="#033b5e" stroke-width="0.6" fill="none"/>
<path d="M725.60 63.00h3v4.6l3.2 4.6q0.3 1.3-1 1.3h-7.4q-1.3 0-1-1.3l3.2-4.6z" fill="none" stroke="#f0f0f0" stroke-width="0.9"/><path d="M724.80 70.00l-1.9 2.8q-0.2 0.9 0.7 0.9h6.9q0.9 0 0.7-0.9l-1.9-2.8z" fill="#f0f0f0"/>
<circle cx="750.50" cy="68.60" r="2.30" fill="none" stroke="#f0f0f0" stroke-width="1.66"/><path d="M753.35 68.60L755.10 68.60M752.52 70.62L753.75 71.85M750.50 71.45L750.50 73.20M748.48 70.62L747.25 71.85M747.65 68.60L745.90 68.60M748.48 66.58L747.25 65.35M750.50 65.75L750.50 64.00M752.52 66.58L753.75 65.35" stroke="#f0f0f0" stroke-width="1.56"/>
<path d="M799.6 64.4v8.4M804 63v9.6" stroke="#f0f0f0" stroke-width="0.9"/><rect x="798.2" y="66.2" width="2.8" height="4.6" fill="#f0f0f0"/><rect x="802.7" y="65" width="2.6" height="5.2" fill="#033b5e" stroke="#f0f0f0" stroke-width="0.8"/>
<path d="M840.8 63.2v8.6l2.2-1.8l1.4 3l1.2-0.6l-1.4-2.9h3z" fill="#f4f4f4"/>
<path d="M900.00 63.00h3v4.6l3.2 4.6q0.3 1.3-1 1.3h-7.4q-1.3 0-1-1.3l3.2-4.6z" fill="none" stroke="#f0f0f0" stroke-width="0.9"/><path d="M899.20 70.00l-1.9 2.8q-0.2 0.9 0.7 0.9h6.9q0.9 0 0.7-0.9l-1.9-2.8z" fill="#f0f0f0"/>
<path d="M948.8 62.8h8.6" stroke="#f0f0f0" stroke-width="1.2"/><path d="M949.6 64.8l1.6 5l1.8-4l1.4 2.2l2.2-3.4" fill="none" stroke="#f0f0f0" stroke-width="0.9"/><path d="M949 73.2l8.8-3" stroke="#f0f0f0" stroke-width="1"/><path d="M949.3 63v4" stroke="#f0f0f0" stroke-width="0.8"/>
<path d="M971 78.4h10.6M971 88.2h10.6" stroke="#e4e4e4" stroke-width="1.1"/><path d="M971.6 86.4l8-6.4M976.6 80h3.4v3" fill="none" stroke="#e4e4e4" stroke-width="0.9"/>
<path d="M66.6 539.2h5" stroke="#f0f0f0" stroke-width="1.2"/><path d="M69.1 541l2.6 3.4h-5.2z" fill="#f0f0f0"/>
<path d="M13.4 540l-1.6 1.4l1.6 1.4z" fill="#666"/><path d="M845 540l-1.6 1.4l1.6 1.4zM852.6 540l1.6 1.4l-1.6 1.4z" fill="#555"/>
<path d="M860.8 541.4l3.4-2.8v5.6zM870 541.4l-3.4-2.8v5.6z" fill="#f0f0f0"/><path d="M864.4 541.4h2.2" stroke="#f0f0f0" stroke-width="1.6"/>
<circle cx="878.2" cy="541.4" r="3.2" fill="none" stroke="#e8e8e8" stroke-width="0.9"/><path d="M878.2 536.8v9.2M873.6 541.4h9.2" stroke="#e8e8e8" stroke-width="0.8"/>
<circle cx="890.8" cy="540.6" r="3.3" fill="none" stroke="#e8e8e8" stroke-width="0.9"/><path d="M893.2 543l3.2 3.2" stroke="#e8e8e8" stroke-width="1.2"/><path d="M889 540.6h3.6M890.8 538.8v3.6" stroke="#e8e8e8" stroke-width="0.8"/>
<circle cx="903" cy="540.6" r="3.3" fill="none" stroke="#484848" stroke-width="0.9"/><path d="M905.4 543l3.2 3.2" stroke="#484848" stroke-width="1.2"/><path d="M901.2 540.6h3.6" stroke="#484848" stroke-width="0.8"/>
<path d="M914.6 536.8v8.6l2.2-1.8l1.4 3l1.2-0.6l-1.4-2.9h3z" fill="#f4f4f4"/>
</svg>
</body></html>
